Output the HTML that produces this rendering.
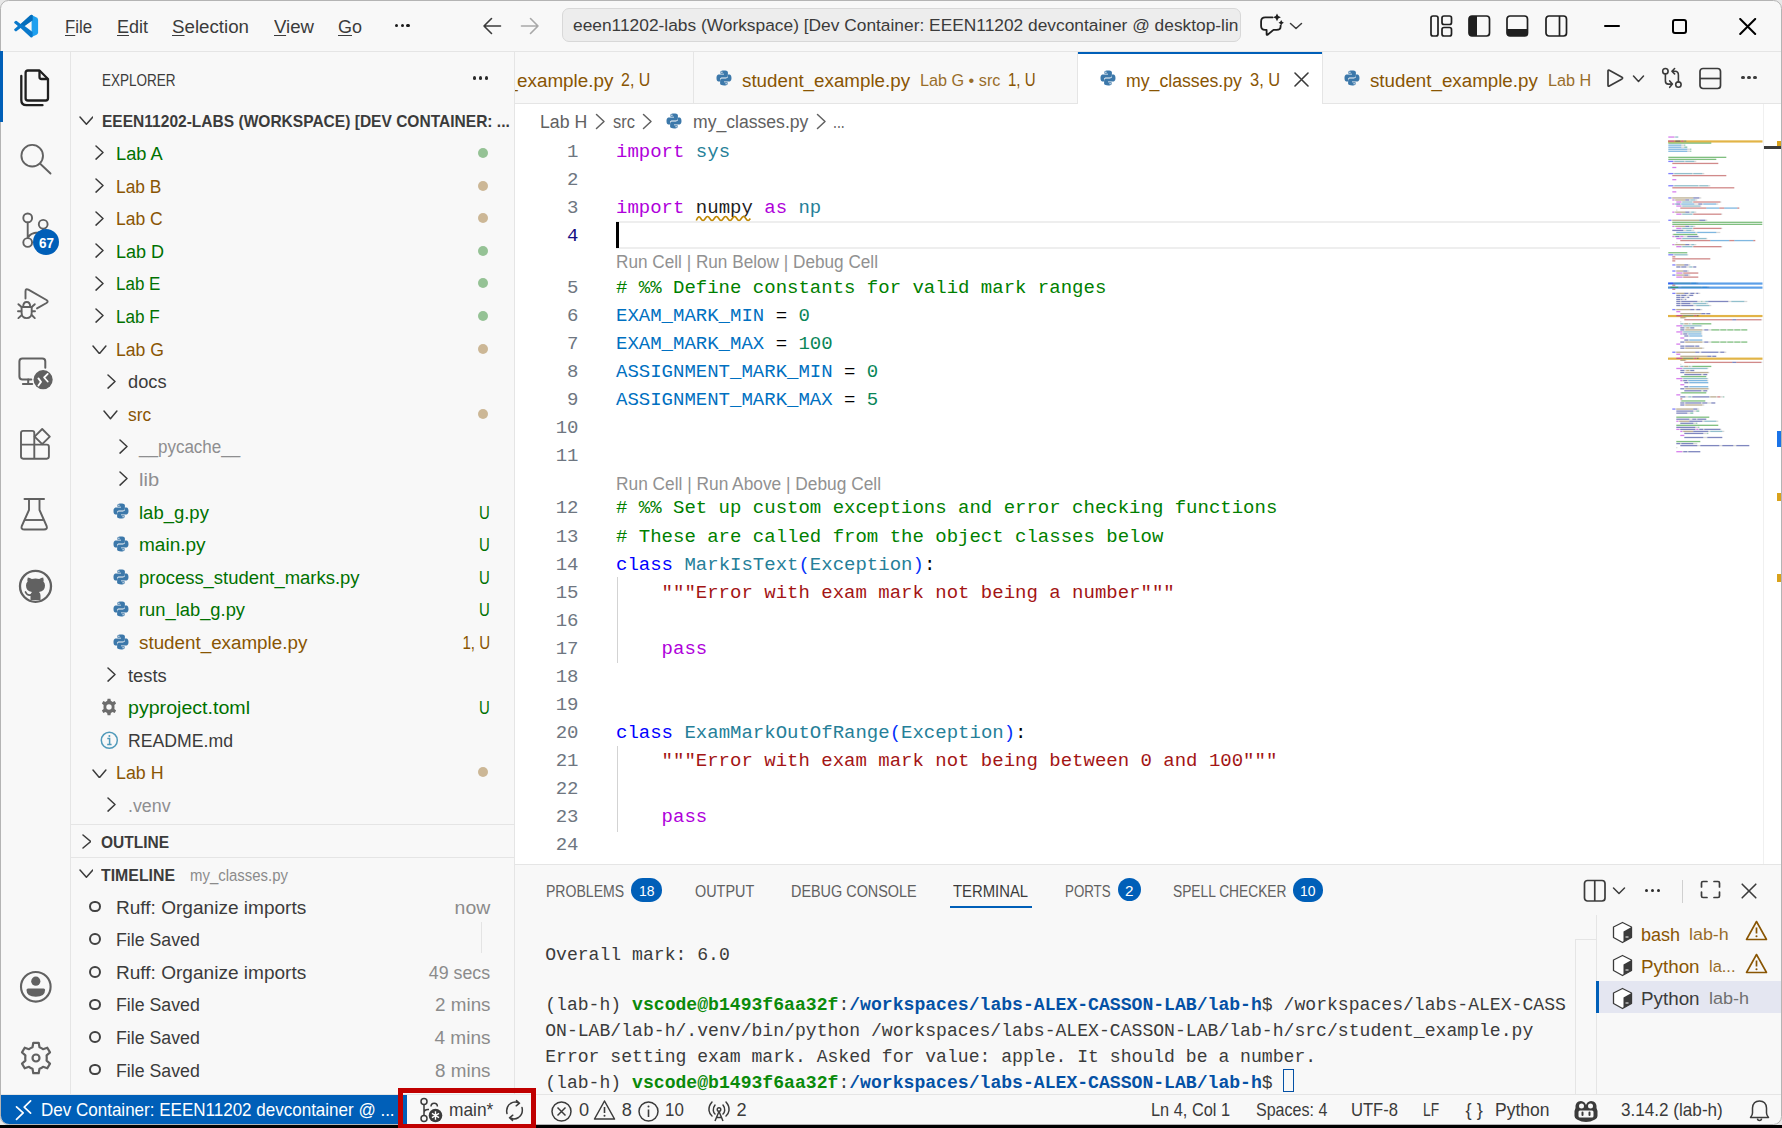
<!DOCTYPE html>
<html><head><meta charset="utf-8"><style>
html,body{margin:0;padding:0;width:1782px;height:1128px;overflow:hidden;background:#000;}
#root{position:absolute;left:0;top:0;width:1782px;height:1128px;overflow:hidden;}
</style></head><body><div id="root">
<div style="position:absolute;left:0px;top:0px;width:1782px;height:1128px;background:#e8e8e8;"></div>
<div style="position:absolute;left:0px;top:1124.5px;width:1782px;height:3.5px;background:#000000;"></div>
<div style="position:absolute;left:0;top:0;width:1782px;height:1125px;background:#f8f8f8;border-radius:8.5px;overflow:hidden;box-sizing:border-box;border:1px solid #b4b4b4;"></div>
<div style="position:absolute;left:1px;top:51px;width:1780px;height:1px;background:#e5e5e5;"></div>
<div style="position:absolute;left:70px;top:52px;width:1px;height:1042px;background:#e5e5e5;"></div>
<div style="position:absolute;left:0px;top:51px;width:3px;height:71px;background:#005fb8;"></div>
<div style="position:absolute;left:514px;top:52px;width:1px;height:1042px;background:#e5e5e5;"></div>
<div style="position:absolute;left:515px;top:104px;width:1266px;height:760px;background:#ffffff;"></div>
<div style="position:absolute;left:515px;top:103px;width:1266px;height:1px;background:#e5e5e5;"></div>
<div style="position:absolute;left:515px;top:864px;width:1266px;height:1px;background:#e5e5e5;"></div>
<div style="position:absolute;left:1px;top:1094px;width:1780px;height:1px;background:#e5e5e5;"></div>
<div style="position:absolute;left:71px;top:824px;width:443px;height:1px;background:#e5e5e5;"></div>
<div style="position:absolute;left:71px;top:857px;width:443px;height:1px;background:#e5e5e5;"></div>
<svg style="position:absolute;left:13.8px;top:13.6px;" width="25" height="25" viewBox="0 0 25 25" fill="none">
<path d="M17.6 1.0 L22.6 3.4 Q24.1 4.2 24.1 5.9 V18.2 Q24.1 19.9 22.6 20.7 L17.6 23.1 Z" fill="#1fa0ef"/>
<path d="M18.2 0.9 Q17.2 0.5 16.3 1.3 L6.6 10.1 L2.7 7.1 Q1.9 6.5 1.1 7.2 L0.5 7.8 Q-0.2 8.5 0.5 9.2 L3.9 12.1 L0.5 15.0 Q-0.2 15.7 0.5 16.4 L1.1 17.0 Q1.9 17.7 2.7 17.1 L6.6 14.1 L16.3 22.9 Q17.2 23.7 18.2 23.3 L18.6 23.1 V1.1 Z M18.6 6.3 V17.9 L10.6 12.1 Z" fill="#0a79cb" fill-rule="evenodd"/>
<path d="M18.6 6.3 L10.6 12.1 L6.6 10.1 L16.3 1.3 Q17.2 0.5 18.2 0.9 L18.6 1.1 Z" fill="#0066b0" opacity="0.6"/>
</svg>
<div id="t1" style="position:absolute;left:65px;top:16.78px;font-family:'Liberation Sans', sans-serif;font-size:19.2px;line-height:19.2px;color:#3b3b3b;font-weight:normal;white-space:pre;transform:scaleX(0.8727);transform-origin:left top;"><u style="text-decoration-thickness:1px;text-underline-offset:2px">F</u>ile</div>
<div id="t2" style="position:absolute;left:117.3px;top:16.78px;font-family:'Liberation Sans', sans-serif;font-size:19.2px;line-height:19.2px;color:#3b3b3b;font-weight:normal;white-space:pre;transform:scaleX(0.9372);transform-origin:left top;"><u style="text-decoration-thickness:1px;text-underline-offset:2px">E</u>dit</div>
<div id="t3" style="position:absolute;left:172.3px;top:16.78px;font-family:'Liberation Sans', sans-serif;font-size:19.2px;line-height:19.2px;color:#3b3b3b;font-weight:normal;white-space:pre;transform:scaleX(0.9753);transform-origin:left top;"><u style="text-decoration-thickness:1px;text-underline-offset:2px">S</u>election</div>
<div id="t4" style="position:absolute;left:273.5px;top:16.78px;font-family:'Liberation Sans', sans-serif;font-size:19.2px;line-height:19.2px;color:#3b3b3b;font-weight:normal;white-space:pre;transform:scaleX(0.9697);transform-origin:left top;"><u style="text-decoration-thickness:1px;text-underline-offset:2px">V</u>iew</div>
<div id="t5" style="position:absolute;left:337.8px;top:16.78px;font-family:'Liberation Sans', sans-serif;font-size:19.2px;line-height:19.2px;color:#3b3b3b;font-weight:normal;white-space:pre;transform:scaleX(0.9372);transform-origin:left top;"><u style="text-decoration-thickness:1px;text-underline-offset:2px">G</u>o</div>
<div style="position:absolute;left:394.59999999999997px;top:24px;width:3.2px;height:3.2px;background:#1a1a1a;border-radius:50%"></div>
<div style="position:absolute;left:400.5px;top:24px;width:3.2px;height:3.2px;background:#1a1a1a;border-radius:50%"></div>
<div style="position:absolute;left:406.4px;top:24px;width:3.2px;height:3.2px;background:#1a1a1a;border-radius:50%"></div>
<svg style="position:absolute;left:482px;top:16px;" width="20" height="20" viewBox="0 0 20 20" fill="none"><path d="M18.5 10 H2 M9.5 2.5 L2 10 L9.5 17.5" stroke="#3b3b3b" stroke-width="1.6" stroke-linecap="round" stroke-linejoin="round"/></svg>
<svg style="position:absolute;left:520px;top:16px;" width="20" height="20" viewBox="0 0 20 20" fill="none"><path d="M1.5 10 H18 M10.5 2.5 L18 10 L10.5 17.5" stroke="#a8a8a8" stroke-width="1.6" stroke-linecap="round" stroke-linejoin="round"/></svg>
<div style="position:absolute;left:562px;top:8px;width:679px;height:34px;box-sizing:border-box;background:#ededed;border:1px solid #d8d8d8;border-radius:7px;overflow:hidden"></div>
<div style="position:absolute;left:563px;top:9px;width:677px;height:32px;overflow:hidden">
<div id="t6" style="position:absolute;left:10px;top:8.38px;font-family:'Liberation Sans', sans-serif;font-size:17.2px;line-height:17.2px;color:#3b3b3b;font-weight:normal;white-space:pre;transform:scaleX(1.0091);transform-origin:left top;">eeen11202-labs (Workspace) [Dev Container: EEEN11202 devcontainer @ desktop-lin</div>
</div>
<svg style="position:absolute;left:1258px;top:13px;" width="28" height="26" viewBox="0 0 28 26" fill="none">
<path d="M14.5 4.4 H7.3 Q3.1 4.4 3.1 8.6 V13 Q3.1 16.9 7 16.9 H8.6 V21.3 Q8.6 22.4 9.6 21.7 L15.5 16.9 H18.6 Q22.6 16.9 22.6 13.5 V12.6" stroke="#1f1f1f" stroke-width="1.8" stroke-linejoin="round" stroke-linecap="round"/>
<path d="M19 0.4 L20.3 3 L22.9 4.3 L20.3 5.6 L19 8.2 L17.7 5.6 L15.1 4.3 L17.7 3 Z" fill="#1f1f1f"/>
<path d="M23.2 7 L24.2 8.7 L25.9 9.7 L24.2 10.7 L23.2 12.4 L22.2 10.7 L20.5 9.7 L22.2 8.7 Z" fill="#1f1f1f"/>
</svg>
<svg style="position:absolute;left:1289px;top:21px;" width="14" height="10" viewBox="0 0 14 10" fill="none"><path d="M1.5 2.5 L7 7.5 L12.5 2.5" stroke="#3b3b3b" stroke-width="1.5" stroke-linecap="round" stroke-linejoin="round"/></svg>
<svg style="position:absolute;left:1430px;top:15px;" width="23" height="22" viewBox="0 0 23 22" fill="none"><rect x="1" y="1" width="7" height="20" rx="2" stroke="#1f1f1f" stroke-width="1.7"/><rect x="12" y="1" width="9.5" height="8.5" rx="2" stroke="#1f1f1f" stroke-width="1.7"/><rect x="12" y="12.5" width="9.5" height="8.5" rx="2" stroke="#1f1f1f" stroke-width="1.7"/></svg>
<svg style="position:absolute;left:1468px;top:15px;" width="23" height="22" viewBox="0 0 23 22" fill="none"><rect x="1" y="1" width="20.5" height="20" rx="3" stroke="#1f1f1f" stroke-width="1.7"/><path d="M4 1 H9 V21 H4 Q1 21 1 18 V4 Q1 1 4 1 Z" fill="#1f1f1f"/></svg>
<svg style="position:absolute;left:1506px;top:15px;" width="23" height="22" viewBox="0 0 23 22" fill="none"><rect x="1" y="1" width="20.5" height="20" rx="3" stroke="#1f1f1f" stroke-width="1.7"/><path d="M1 14 H21.5 V18 Q21.5 21 18.5 21 H4 Q1 21 1 18 Z" fill="#1f1f1f"/></svg>
<svg style="position:absolute;left:1545px;top:15px;" width="23" height="22" viewBox="0 0 23 22" fill="none"><rect x="1" y="1" width="20.5" height="20" rx="3" stroke="#1f1f1f" stroke-width="1.7"/><path d="M14.5 1 V21" stroke="#1f1f1f" stroke-width="1.7"/></svg>
<div style="position:absolute;left:1604px;top:24.5px;width:15.5px;height:2px;background:#000000;border-radius:1px"></div>
<div style="position:absolute;left:1672.3px;top:18.5px;width:14.8px;height:15.2px;box-sizing:border-box;border:2px solid #000000;border-radius:3px"></div>
<svg style="position:absolute;left:1739px;top:18px;" width="18" height="17" viewBox="0 0 18 17" fill="none"><path d="M1.2 1 L16.2 16 M16.2 1 L1.2 16" stroke="#000000" stroke-width="2" stroke-linecap="round"/></svg>
<svg style="position:absolute;left:18px;top:68px;" width="34" height="40" viewBox="0 0 34 40" fill="none">
<path d="M7.6 4.8 Q7.6 2.5 9.9 2.5 H21.5 L30 11 V30.2 Q30 32.5 27.7 32.5 H9.9 Q7.6 32.5 7.6 30.2 Z" stroke="#1f1f1f" stroke-width="2.3" stroke-linejoin="round"/>
<path d="M21.5 2.5 V9 Q21.5 11 23.5 11 H30" stroke="#1f1f1f" stroke-width="2.3" stroke-linejoin="round"/>
<path d="M3.3 8 V32 Q3.3 37.2 8.5 37.2 H24.5" stroke="#1f1f1f" stroke-width="2.3" stroke-linecap="round"/>
</svg>
<svg style="position:absolute;left:18px;top:142px;" width="36" height="36" viewBox="0 0 36 36" fill="none"><circle cx="14.2" cy="13.7" r="10.8" stroke="#616161" stroke-width="1.9"/><path d="M22.2 21.8 L32.5 31.5" stroke="#616161" stroke-width="1.9" stroke-linecap="round"/></svg>
<svg style="position:absolute;left:0px;top:200px;" width="70" height="60" viewBox="0 0 70 60" fill="none">
<circle cx="27.7" cy="17.9" r="4.4" stroke="#616161" stroke-width="1.9"/>
<circle cx="27.7" cy="42.5" r="4.4" stroke="#616161" stroke-width="1.9"/>
<circle cx="43.2" cy="24.3" r="4.4" stroke="#616161" stroke-width="1.9"/>
<path d="M27.7 22.3 V38.1 M43.2 28.7 Q43 32 38 32.5 Q30 33 28.2 37.5" stroke="#616161" stroke-width="1.9"/>
</svg>
<div style="position:absolute;left:32.6px;top:228.7px;width:26.6px;height:26.6px;border-radius:50%;background:#005fb8"></div>
<div id="t7" style="position:absolute;left:38.6px;top:236.47px;font-family:'Liberation Sans', sans-serif;font-size:14.5px;line-height:14.5px;color:#ffffff;font-weight:bold;white-space:pre;transform:scaleX(0.9293);transform-origin:left top;">67</div>
<svg style="position:absolute;left:0px;top:280px;" width="70" height="50" viewBox="0 0 70 50" fill="none">
<path d="M25.5 18.6 V11.5 Q25.5 8.2 28.4 9.7 L46.5 20 Q48.8 21.5 46.5 23 L37 28.4" stroke="#616161" stroke-width="1.9" stroke-linejoin="round" stroke-linecap="round"/>
<path d="M21.6 27 H31.7 V32.5 Q31.7 38.1 26.6 38.1 Q21.6 38.1 21.6 32.5 Z" stroke="#616161" stroke-width="1.9" stroke-linejoin="round"/>
<path d="M23.2 26.8 Q23.2 22 26.7 22 Q30.2 22 30.2 26.8" stroke="#616161" stroke-width="1.9"/>
<path d="M18.4 24.2 L21.3 26.8 M18 31.3 H21.3 M18.4 38.1 L21.6 35.3 M34.8 24.2 L32 26.8 M35 31.3 H31.8 M34.8 38.1 L31.7 35" stroke="#616161" stroke-width="1.9" stroke-linecap="round"/>
</svg>
<svg style="position:absolute;left:16px;top:355px;" width="40" height="40" viewBox="0 0 40 40" fill="none">
<path d="M29.3 12.7 V6.5 Q29.3 3.5 26.3 3.5 H6.4 Q3.4 3.5 3.4 6.5 V21.6 Q3.4 24.6 6.4 24.6 H15.3" stroke="#616161" stroke-width="2" stroke-linecap="round" stroke-linejoin="round"/>
<path d="M12.2 24.6 V29.1 M6.9 29.1 H16.2" stroke="#616161" stroke-width="2" stroke-linecap="round"/>
<circle cx="27.1" cy="24.7" r="9.6" fill="#616161"/>
<path d="M22.4 23.4 L25 26.9 L22.4 30.5 M31.7 18.9 L28.1 22.5 L31.7 26.5" stroke="#ffffff" stroke-width="1.8" stroke-linecap="round" stroke-linejoin="round"/>
</svg>
<svg style="position:absolute;left:18px;top:425px;" width="36" height="36" viewBox="0 0 36 36" fill="none">
<path d="M3 8 Q3 5.9 5.1 5.9 H14.2 Q16.3 5.9 16.3 8 V19.6 H28.8 Q30.9 19.6 30.9 21.7 V31.6 Q30.9 33.7 28.8 33.7 H5.1 Q3 33.7 3 31.6 Z M3 19.6 H16.3 M16.3 19.6 V33.7" stroke="#616161" stroke-width="1.9" stroke-linejoin="round"/>
<path d="M24.2 4 L31.8 11.6 L24.2 19.2 L16.6 11.6 Z" stroke="#616161" stroke-width="1.9" stroke-linejoin="round"/>
</svg>
<svg style="position:absolute;left:18px;top:496px;" width="36" height="38" viewBox="0 0 36 38" fill="none">
<path d="M6.5 3 H26" stroke="#616161" stroke-width="2" stroke-linecap="round"/>
<path d="M11 3 V14 L3.8 30 Q2.6 33.5 6.5 33.5 H26 Q29.8 33.5 28.6 30 L21.5 14 V3" stroke="#616161" stroke-width="1.9" stroke-linejoin="round"/>
<path d="M7 24 H25.5" stroke="#616161" stroke-width="1.9"/>
</svg>
<svg style="position:absolute;left:17px;top:568px;" width="38" height="38" viewBox="0 0 38 38" fill="none">
<circle cx="18.5" cy="18.3" r="15.5" stroke="#616161" stroke-width="2.3"/>
<path d="M13.5 32 V27.5 Q13.5 25 15 24 Q9 23 9 17.5 Q9 15 10.6 13.4 Q10.1 11.5 10.8 9.4 Q12.8 9.4 14.8 11 Q18.5 10 22.2 11 Q24.2 9.4 26.2 9.4 Q26.9 11.5 26.4 13.4 Q28 15 28 17.5 Q28 23 22 24 Q23.5 25 23.5 27.5 V32 Z" fill="#616161"/>
<path d="M13.5 27 Q10 27.5 8.5 24" stroke="#616161" stroke-width="1.8" stroke-linecap="round"/>
</svg>
<svg style="position:absolute;left:17px;top:968px;" width="38" height="38" viewBox="0 0 38 38" fill="none">
<circle cx="18.8" cy="18.8" r="14.8" stroke="#616161" stroke-width="2.1"/>
<circle cx="18.8" cy="13.2" r="4.6" fill="#616161"/>
<path d="M9.5 22 Q9.5 20.5 11 20.5 H26.6 Q28.1 20.5 28.1 22 Q28.1 28.8 18.8 28.8 Q9.5 28.8 9.5 22 Z" fill="#616161"/>
</svg>
<svg style="position:absolute;left:18px;top:1040px" width="36" height="36" viewBox="0 0 36 36" fill="none">
<path d="M15.3 2.8 H20.7 L21.5 7.2 Q23.5 8 25 9.2 L29.3 7.7 L32 12.4 L28.6 15.3 Q28.9 18 28.6 20.7 L32 23.6 L29.3 28.3 L25 26.8 Q23.5 28 21.5 28.8 L20.7 33.2 H15.3 L14.5 28.8 Q12.5 28 11 26.8 L6.7 28.3 L4 23.6 L7.4 20.7 Q7.1 18 7.4 15.3 L4 12.4 L6.7 7.7 L11 9.2 Q12.5 8 14.5 7.2 Z" stroke="#616161" stroke-width="2.2" stroke-linejoin="round"/>
<circle cx="18" cy="18" r="3.5" stroke="#616161" stroke-width="2.2"/>
</svg>
<div id="t8" style="position:absolute;left:101.5px;top:71.94px;font-family:'Liberation Sans', sans-serif;font-size:16.3px;line-height:16.3px;color:#3b3b3b;font-weight:normal;white-space:pre;transform:scaleX(0.8299);transform-origin:left top;">EXPLORER</div>
<div style="position:absolute;left:472.79999999999995px;top:76.4px;width:3.2px;height:3.2px;background:#2b2b2b;border-radius:50%"></div>
<div style="position:absolute;left:478.7px;top:76.4px;width:3.2px;height:3.2px;background:#2b2b2b;border-radius:50%"></div>
<div style="position:absolute;left:484.7px;top:76.4px;width:3.2px;height:3.2px;background:#2b2b2b;border-radius:50%"></div>
<svg style="position:absolute;left:78.6px;top:116.2px;" width="14.8" height="9.3" viewBox="0 0 14.8 9.3" fill="none"><path d="M1 1 L7.4 8.3 L13.8 1" stroke="#3b3b3b" stroke-width="1.5" stroke-linecap="round" stroke-linejoin="round"/></svg>
<div id="t9" style="position:absolute;left:101.6px;top:113.24px;font-family:'Liberation Sans', sans-serif;font-size:16.3px;line-height:16.3px;color:#3b3b3b;font-weight:bold;white-space:pre;transform:scaleX(0.9544);transform-origin:left top;">EEEN11202-LABS (WORKSPACE) [DEV CONTAINER: ...</div>
<svg style="position:absolute;left:95.4px;top:145.45px;" width="9" height="15.1" viewBox="0 0 9 15.1" fill="none"><path d="M1 1 L8 7.55 L1 14.1" stroke="#3b3b3b" stroke-width="1.5" stroke-linecap="round" stroke-linejoin="round"/></svg>
<div id="t10" style="position:absolute;left:116.1px;top:144.08px;font-family:'Liberation Sans', sans-serif;font-size:19.2px;line-height:19.2px;color:#007100;font-weight:normal;white-space:pre;transform:scaleX(0.9512);transform-origin:left top;">Lab A</div>
<div style="position:absolute;left:478px;top:148.0px;width:10px;height:10px;background:#95c295;border-radius:50%"></div>
<svg style="position:absolute;left:95.4px;top:178.04999999999998px;" width="9" height="15.1" viewBox="0 0 9 15.1" fill="none"><path d="M1 1 L8 7.55 L1 14.1" stroke="#3b3b3b" stroke-width="1.5" stroke-linecap="round" stroke-linejoin="round"/></svg>
<div id="t11" style="position:absolute;left:116.1px;top:176.68px;font-family:'Liberation Sans', sans-serif;font-size:19.2px;line-height:19.2px;color:#895503;font-weight:normal;white-space:pre;transform:scaleX(0.9052);transform-origin:left top;">Lab B</div>
<div style="position:absolute;left:478px;top:180.6px;width:10px;height:10px;background:#ccb796;border-radius:50%"></div>
<svg style="position:absolute;left:95.4px;top:210.64999999999998px;" width="9" height="15.1" viewBox="0 0 9 15.1" fill="none"><path d="M1 1 L8 7.55 L1 14.1" stroke="#3b3b3b" stroke-width="1.5" stroke-linecap="round" stroke-linejoin="round"/></svg>
<div id="t12" style="position:absolute;left:116.1px;top:209.28px;font-family:'Liberation Sans', sans-serif;font-size:19.2px;line-height:19.2px;color:#895503;font-weight:normal;white-space:pre;transform:scaleX(0.9121);transform-origin:left top;">Lab C</div>
<div style="position:absolute;left:478px;top:213.2px;width:10px;height:10px;background:#ccb796;border-radius:50%"></div>
<svg style="position:absolute;left:95.4px;top:243.25px;" width="9" height="15.1" viewBox="0 0 9 15.1" fill="none"><path d="M1 1 L8 7.55 L1 14.1" stroke="#3b3b3b" stroke-width="1.5" stroke-linecap="round" stroke-linejoin="round"/></svg>
<div id="t13" style="position:absolute;left:116.1px;top:241.88px;font-family:'Liberation Sans', sans-serif;font-size:19.2px;line-height:19.2px;color:#007100;font-weight:normal;white-space:pre;transform:scaleX(0.9394);transform-origin:left top;">Lab D</div>
<div style="position:absolute;left:478px;top:245.8px;width:10px;height:10px;background:#95c295;border-radius:50%"></div>
<svg style="position:absolute;left:95.4px;top:275.85px;" width="9" height="15.1" viewBox="0 0 9 15.1" fill="none"><path d="M1 1 L8 7.55 L1 14.1" stroke="#3b3b3b" stroke-width="1.5" stroke-linecap="round" stroke-linejoin="round"/></svg>
<div id="t14" style="position:absolute;left:116.1px;top:274.48px;font-family:'Liberation Sans', sans-serif;font-size:19.2px;line-height:19.2px;color:#007100;font-weight:normal;white-space:pre;transform:scaleX(0.8852);transform-origin:left top;">Lab E</div>
<div style="position:absolute;left:478px;top:278.40000000000003px;width:10px;height:10px;background:#95c295;border-radius:50%"></div>
<svg style="position:absolute;left:95.4px;top:308.45px;" width="9" height="15.1" viewBox="0 0 9 15.1" fill="none"><path d="M1 1 L8 7.55 L1 14.1" stroke="#3b3b3b" stroke-width="1.5" stroke-linecap="round" stroke-linejoin="round"/></svg>
<div id="t15" style="position:absolute;left:116.1px;top:307.08px;font-family:'Liberation Sans', sans-serif;font-size:19.2px;line-height:19.2px;color:#007100;font-weight:normal;white-space:pre;transform:scaleX(0.8925);transform-origin:left top;">Lab F</div>
<div style="position:absolute;left:478px;top:311.0px;width:10px;height:10px;background:#95c295;border-radius:50%"></div>
<svg style="position:absolute;left:91.8px;top:344.70000000000005px;" width="14.9" height="9.7" viewBox="0 0 14.9 9.7" fill="none"><path d="M1 1 L7.45 8.7 L13.9 1" stroke="#3b3b3b" stroke-width="1.5" stroke-linecap="round" stroke-linejoin="round"/></svg>
<div id="t16" style="position:absolute;left:116.1px;top:339.68px;font-family:'Liberation Sans', sans-serif;font-size:19.2px;line-height:19.2px;color:#895503;font-weight:normal;white-space:pre;transform:scaleX(0.9162);transform-origin:left top;">Lab G</div>
<div style="position:absolute;left:478px;top:343.6px;width:10px;height:10px;background:#ccb796;border-radius:50%"></div>
<svg style="position:absolute;left:107.2px;top:373.65px;" width="9" height="15.1" viewBox="0 0 9 15.1" fill="none"><path d="M1 1 L8 7.55 L1 14.1" stroke="#3b3b3b" stroke-width="1.5" stroke-linecap="round" stroke-linejoin="round"/></svg>
<div id="t17" style="position:absolute;left:127.8px;top:372.28px;font-family:'Liberation Sans', sans-serif;font-size:19.2px;line-height:19.2px;color:#3b3b3b;font-weight:normal;white-space:pre;transform:scaleX(0.9499);transform-origin:left top;">docs</div>
<svg style="position:absolute;left:103.4px;top:409.90000000000003px;" width="14.9" height="9.7" viewBox="0 0 14.9 9.7" fill="none"><path d="M1 1 L7.45 8.7 L13.9 1" stroke="#3b3b3b" stroke-width="1.5" stroke-linecap="round" stroke-linejoin="round"/></svg>
<div id="t18" style="position:absolute;left:127.8px;top:404.88px;font-family:'Liberation Sans', sans-serif;font-size:19.2px;line-height:19.2px;color:#895503;font-weight:normal;white-space:pre;transform:scaleX(0.9031);transform-origin:left top;">src</div>
<div style="position:absolute;left:478px;top:408.8px;width:10px;height:10px;background:#ccb796;border-radius:50%"></div>
<svg style="position:absolute;left:118.8px;top:438.85px;" width="9" height="15.1" viewBox="0 0 9 15.1" fill="none"><path d="M1 1 L8 7.55 L1 14.1" stroke="#3b3b3b" stroke-width="1.5" stroke-linecap="round" stroke-linejoin="round"/></svg>
<div id="t19" style="position:absolute;left:139.4px;top:437.48px;font-family:'Liberation Sans', sans-serif;font-size:19.2px;line-height:19.2px;color:#8e8e90;font-weight:normal;white-space:pre;transform:scaleX(0.8865);transform-origin:left top;">__pycache__</div>
<svg style="position:absolute;left:118.8px;top:471.45px;" width="9" height="15.1" viewBox="0 0 9 15.1" fill="none"><path d="M1 1 L8 7.55 L1 14.1" stroke="#3b3b3b" stroke-width="1.5" stroke-linecap="round" stroke-linejoin="round"/></svg>
<div id="t20" style="position:absolute;left:139.4px;top:470.08px;font-family:'Liberation Sans', sans-serif;font-size:19.2px;line-height:19.2px;color:#8e8e90;font-weight:normal;white-space:pre;transform:scaleX(1.0467);transform-origin:left top;">lib</div>
<svg style="position:absolute;left:113px;top:503.4000000000001px;" width="16" height="16" viewBox="0 0 16 16" fill="none"><path d="M7.9 0.5 C4.2 0.5 4.4 2.1 4.4 2.1 V3.8 H8 V4.4 H3 C3 4.4 0.5 4.1 0.5 7.9 C0.5 11.7 2.7 11.5 2.7 11.5 H4 V9.7 C4 9.7 3.9 7.5 6.2 7.5 H9.8 C9.8 7.5 11.9 7.6 11.9 5.4 V2.4 C11.9 2.4 12.2 0.5 7.9 0.5 Z M5.9 1.6 A0.65 0.65 0 1 1 5.9 2.9 A0.65 0.65 0 1 1 5.9 1.6 Z" fill="#3c78aa"/>
<path d="M8.1 15.5 C11.8 15.5 11.6 13.9 11.6 13.9 V12.2 H8 V11.6 H13 C13 11.6 15.5 11.9 15.5 8.1 C15.5 4.3 13.3 4.5 13.3 4.5 H12 V6.3 C12 6.3 12.1 8.5 9.8 8.5 H6.2 C6.2 8.5 4.1 8.4 4.1 10.6 V13.6 C4.1 13.6 3.8 15.5 8.1 15.5 Z M10.1 14.4 A0.65 0.65 0 1 1 10.1 13.1 A0.65 0.65 0 1 1 10.1 14.4 Z" fill="#3c78aa"/></svg>
<div id="t21" style="position:absolute;left:139.4px;top:502.68px;font-family:'Liberation Sans', sans-serif;font-size:19.2px;line-height:19.2px;color:#007100;font-weight:normal;white-space:pre;transform:scaleX(0.9635);transform-origin:left top;">lab_g.py</div>
<div id="t22" style="position:absolute;right:1292.2px;top:502.68px;font-family:'Liberation Sans', sans-serif;font-size:19.2px;line-height:19.2px;color:#007100;font-weight:normal;white-space:pre;transform:scaleX(0.7793);transform-origin:right top;">U</div>
<svg style="position:absolute;left:113px;top:536.0px;" width="16" height="16" viewBox="0 0 16 16" fill="none"><path d="M7.9 0.5 C4.2 0.5 4.4 2.1 4.4 2.1 V3.8 H8 V4.4 H3 C3 4.4 0.5 4.1 0.5 7.9 C0.5 11.7 2.7 11.5 2.7 11.5 H4 V9.7 C4 9.7 3.9 7.5 6.2 7.5 H9.8 C9.8 7.5 11.9 7.6 11.9 5.4 V2.4 C11.9 2.4 12.2 0.5 7.9 0.5 Z M5.9 1.6 A0.65 0.65 0 1 1 5.9 2.9 A0.65 0.65 0 1 1 5.9 1.6 Z" fill="#3c78aa"/>
<path d="M8.1 15.5 C11.8 15.5 11.6 13.9 11.6 13.9 V12.2 H8 V11.6 H13 C13 11.6 15.5 11.9 15.5 8.1 C15.5 4.3 13.3 4.5 13.3 4.5 H12 V6.3 C12 6.3 12.1 8.5 9.8 8.5 H6.2 C6.2 8.5 4.1 8.4 4.1 10.6 V13.6 C4.1 13.6 3.8 15.5 8.1 15.5 Z M10.1 14.4 A0.65 0.65 0 1 1 10.1 13.1 A0.65 0.65 0 1 1 10.1 14.4 Z" fill="#3c78aa"/></svg>
<div id="t23" style="position:absolute;left:139.4px;top:535.28px;font-family:'Liberation Sans', sans-serif;font-size:19.2px;line-height:19.2px;color:#007100;font-weight:normal;white-space:pre;transform:scaleX(0.9913);transform-origin:left top;">main.py</div>
<div id="t24" style="position:absolute;right:1292.2px;top:535.28px;font-family:'Liberation Sans', sans-serif;font-size:19.2px;line-height:19.2px;color:#007100;font-weight:normal;white-space:pre;transform:scaleX(0.7793);transform-origin:right top;">U</div>
<svg style="position:absolute;left:113px;top:568.6px;" width="16" height="16" viewBox="0 0 16 16" fill="none"><path d="M7.9 0.5 C4.2 0.5 4.4 2.1 4.4 2.1 V3.8 H8 V4.4 H3 C3 4.4 0.5 4.1 0.5 7.9 C0.5 11.7 2.7 11.5 2.7 11.5 H4 V9.7 C4 9.7 3.9 7.5 6.2 7.5 H9.8 C9.8 7.5 11.9 7.6 11.9 5.4 V2.4 C11.9 2.4 12.2 0.5 7.9 0.5 Z M5.9 1.6 A0.65 0.65 0 1 1 5.9 2.9 A0.65 0.65 0 1 1 5.9 1.6 Z" fill="#3c78aa"/>
<path d="M8.1 15.5 C11.8 15.5 11.6 13.9 11.6 13.9 V12.2 H8 V11.6 H13 C13 11.6 15.5 11.9 15.5 8.1 C15.5 4.3 13.3 4.5 13.3 4.5 H12 V6.3 C12 6.3 12.1 8.5 9.8 8.5 H6.2 C6.2 8.5 4.1 8.4 4.1 10.6 V13.6 C4.1 13.6 3.8 15.5 8.1 15.5 Z M10.1 14.4 A0.65 0.65 0 1 1 10.1 13.1 A0.65 0.65 0 1 1 10.1 14.4 Z" fill="#3c78aa"/></svg>
<div id="t25" style="position:absolute;left:139.4px;top:567.88px;font-family:'Liberation Sans', sans-serif;font-size:19.2px;line-height:19.2px;color:#007100;font-weight:normal;white-space:pre;transform:scaleX(0.9616);transform-origin:left top;">process_student_marks.py</div>
<div id="t26" style="position:absolute;right:1292.2px;top:567.88px;font-family:'Liberation Sans', sans-serif;font-size:19.2px;line-height:19.2px;color:#007100;font-weight:normal;white-space:pre;transform:scaleX(0.7793);transform-origin:right top;">U</div>
<svg style="position:absolute;left:113px;top:601.2px;" width="16" height="16" viewBox="0 0 16 16" fill="none"><path d="M7.9 0.5 C4.2 0.5 4.4 2.1 4.4 2.1 V3.8 H8 V4.4 H3 C3 4.4 0.5 4.1 0.5 7.9 C0.5 11.7 2.7 11.5 2.7 11.5 H4 V9.7 C4 9.7 3.9 7.5 6.2 7.5 H9.8 C9.8 7.5 11.9 7.6 11.9 5.4 V2.4 C11.9 2.4 12.2 0.5 7.9 0.5 Z M5.9 1.6 A0.65 0.65 0 1 1 5.9 2.9 A0.65 0.65 0 1 1 5.9 1.6 Z" fill="#3c78aa"/>
<path d="M8.1 15.5 C11.8 15.5 11.6 13.9 11.6 13.9 V12.2 H8 V11.6 H13 C13 11.6 15.5 11.9 15.5 8.1 C15.5 4.3 13.3 4.5 13.3 4.5 H12 V6.3 C12 6.3 12.1 8.5 9.8 8.5 H6.2 C6.2 8.5 4.1 8.4 4.1 10.6 V13.6 C4.1 13.6 3.8 15.5 8.1 15.5 Z M10.1 14.4 A0.65 0.65 0 1 1 10.1 13.1 A0.65 0.65 0 1 1 10.1 14.4 Z" fill="#3c78aa"/></svg>
<div id="t27" style="position:absolute;left:139.4px;top:600.48px;font-family:'Liberation Sans', sans-serif;font-size:19.2px;line-height:19.2px;color:#007100;font-weight:normal;white-space:pre;transform:scaleX(0.9554);transform-origin:left top;">run_lab_g.py</div>
<div id="t28" style="position:absolute;right:1292.2px;top:600.48px;font-family:'Liberation Sans', sans-serif;font-size:19.2px;line-height:19.2px;color:#007100;font-weight:normal;white-space:pre;transform:scaleX(0.7793);transform-origin:right top;">U</div>
<svg style="position:absolute;left:113px;top:633.8px;" width="16" height="16" viewBox="0 0 16 16" fill="none"><path d="M7.9 0.5 C4.2 0.5 4.4 2.1 4.4 2.1 V3.8 H8 V4.4 H3 C3 4.4 0.5 4.1 0.5 7.9 C0.5 11.7 2.7 11.5 2.7 11.5 H4 V9.7 C4 9.7 3.9 7.5 6.2 7.5 H9.8 C9.8 7.5 11.9 7.6 11.9 5.4 V2.4 C11.9 2.4 12.2 0.5 7.9 0.5 Z M5.9 1.6 A0.65 0.65 0 1 1 5.9 2.9 A0.65 0.65 0 1 1 5.9 1.6 Z" fill="#3c78aa"/>
<path d="M8.1 15.5 C11.8 15.5 11.6 13.9 11.6 13.9 V12.2 H8 V11.6 H13 C13 11.6 15.5 11.9 15.5 8.1 C15.5 4.3 13.3 4.5 13.3 4.5 H12 V6.3 C12 6.3 12.1 8.5 9.8 8.5 H6.2 C6.2 8.5 4.1 8.4 4.1 10.6 V13.6 C4.1 13.6 3.8 15.5 8.1 15.5 Z M10.1 14.4 A0.65 0.65 0 1 1 10.1 13.1 A0.65 0.65 0 1 1 10.1 14.4 Z" fill="#3c78aa"/></svg>
<div id="t29" style="position:absolute;left:139.4px;top:633.08px;font-family:'Liberation Sans', sans-serif;font-size:19.2px;line-height:19.2px;color:#895503;font-weight:normal;white-space:pre;transform:scaleX(0.9800);transform-origin:left top;">student_example.py</div>
<div id="t30" style="position:absolute;right:1292.2px;top:633.08px;font-family:'Liberation Sans', sans-serif;font-size:19.2px;line-height:19.2px;color:#895503;font-weight:normal;white-space:pre;transform:scaleX(0.7897);transform-origin:right top;">1, U</div>
<svg style="position:absolute;left:107.2px;top:667.0500000000002px;" width="9" height="15.1" viewBox="0 0 9 15.1" fill="none"><path d="M1 1 L8 7.55 L1 14.1" stroke="#3b3b3b" stroke-width="1.5" stroke-linecap="round" stroke-linejoin="round"/></svg>
<div id="t31" style="position:absolute;left:127.8px;top:665.68px;font-family:'Liberation Sans', sans-serif;font-size:19.2px;line-height:19.2px;color:#3b3b3b;font-weight:normal;white-space:pre;transform:scaleX(0.9548);transform-origin:left top;">tests</div>
<svg style="position:absolute;left:100px;top:698.4000000000001px;" width="18" height="18" viewBox="0 0 18 18" fill="none"><path d="M7.6 0.8 H10.4 L10.9 3 Q11.8 3.3 12.5 3.9 L14.7 3.1 L16.1 5.5 L14.4 7 Q14.6 9 14.4 11 L16.1 12.5 L14.7 14.9 L12.5 14.1 Q11.8 14.7 10.9 15 L10.4 17.2 H7.6 L7.1 15 Q6.2 14.7 5.5 14.1 L3.3 14.9 L1.9 12.5 L3.6 11 Q3.4 9 3.6 7 L1.9 5.5 L3.3 3.1 L5.5 3.9 Q6.2 3.3 7.1 3 Z M9 6.3 A2.7 2.7 0 1 0 9 11.7 A2.7 2.7 0 1 0 9 6.3 Z" fill="#6c6c6c" fill-rule="evenodd"/></svg>
<div id="t32" style="position:absolute;left:127.8px;top:698.28px;font-family:'Liberation Sans', sans-serif;font-size:19.2px;line-height:19.2px;color:#007100;font-weight:normal;white-space:pre;transform:scaleX(1.0215);transform-origin:left top;">pyproject.toml</div>
<div id="t33" style="position:absolute;right:1292.2px;top:698.28px;font-family:'Liberation Sans', sans-serif;font-size:19.2px;line-height:19.2px;color:#007100;font-weight:normal;white-space:pre;transform:scaleX(0.7793);transform-origin:right top;">U</div>
<svg style="position:absolute;left:100px;top:730.8000000000002px;" width="19" height="19" viewBox="0 0 19 19" fill="none"><circle cx="9.3" cy="9.3" r="8" stroke="#519aba" stroke-width="1.5"/><path d="M7.3 7.6 H9.6 V13.6 M7.2 13.6 H11.6" stroke="#519aba" stroke-width="1.5"/><circle cx="9.4" cy="5" r="1" fill="#519aba"/></svg>
<div id="t34" style="position:absolute;left:127.8px;top:730.88px;font-family:'Liberation Sans', sans-serif;font-size:19.2px;line-height:19.2px;color:#3b3b3b;font-weight:normal;white-space:pre;transform:scaleX(0.9204);transform-origin:left top;">README.md</div>
<svg style="position:absolute;left:91.8px;top:768.5000000000001px;" width="14.9" height="9.7" viewBox="0 0 14.9 9.7" fill="none"><path d="M1 1 L7.45 8.7 L13.9 1" stroke="#3b3b3b" stroke-width="1.5" stroke-linecap="round" stroke-linejoin="round"/></svg>
<div id="t35" style="position:absolute;left:116.1px;top:763.48px;font-family:'Liberation Sans', sans-serif;font-size:19.2px;line-height:19.2px;color:#895503;font-weight:normal;white-space:pre;transform:scaleX(0.9277);transform-origin:left top;">Lab H</div>
<div style="position:absolute;left:478px;top:767.4000000000001px;width:10px;height:10px;background:#ccb796;border-radius:50%"></div>
<svg style="position:absolute;left:107.2px;top:797.45px;" width="9" height="15.1" viewBox="0 0 9 15.1" fill="none"><path d="M1 1 L8 7.55 L1 14.1" stroke="#3b3b3b" stroke-width="1.5" stroke-linecap="round" stroke-linejoin="round"/></svg>
<div id="t36" style="position:absolute;left:127.8px;top:796.08px;font-family:'Liberation Sans', sans-serif;font-size:19.2px;line-height:19.2px;color:#8e8e90;font-weight:normal;white-space:pre;transform:scaleX(0.9286);transform-origin:left top;">.venv</div>
<svg style="position:absolute;left:81.5px;top:834.4px;" width="9.7" height="15" viewBox="0 0 9.7 15" fill="none"><path d="M1 1 L8.7 7.5 L1 14" stroke="#3b3b3b" stroke-width="1.5" stroke-linecap="round" stroke-linejoin="round"/></svg>
<div id="t37" style="position:absolute;left:100.7px;top:834.45px;font-family:'Liberation Sans', sans-serif;font-size:16.3px;line-height:16.3px;color:#3b3b3b;font-weight:bold;white-space:pre;transform:scaleX(0.9517);transform-origin:left top;">OUTLINE</div>
<svg style="position:absolute;left:78.6px;top:868.8px;" width="14.8" height="9.3" viewBox="0 0 14.8 9.3" fill="none"><path d="M1 1 L7.4 8.3 L13.8 1" stroke="#3b3b3b" stroke-width="1.5" stroke-linecap="round" stroke-linejoin="round"/></svg>
<div id="t38" style="position:absolute;left:100.7px;top:866.54px;font-family:'Liberation Sans', sans-serif;font-size:16.3px;line-height:16.3px;color:#3b3b3b;font-weight:bold;white-space:pre;transform:scaleX(0.9739);transform-origin:left top;">TIMELINE</div>
<div id="t39" style="position:absolute;left:189.7px;top:866.54px;font-family:'Liberation Sans', sans-serif;font-size:16.3px;line-height:16.3px;color:#8b8b8b;font-weight:normal;white-space:pre;transform:scaleX(0.9178);transform-origin:left top;">my_classes.py</div>
<div style="position:absolute;left:89px;top:900.7px;width:11.8px;height:11.8px;box-sizing:border-box;border:2px solid #424242;border-radius:50%"></div>
<div id="t40" style="position:absolute;left:116.1px;top:897.68px;font-family:'Liberation Sans', sans-serif;font-size:19.2px;line-height:19.2px;color:#3b3b3b;font-weight:normal;white-space:pre;transform:scaleX(0.9932);transform-origin:left top;">Ruff: Organize imports</div>
<div id="t41" style="position:absolute;right:1291.8px;top:897.68px;font-family:'Liberation Sans', sans-serif;font-size:19.2px;line-height:19.2px;color:#8b8b8b;font-weight:normal;white-space:pre;transform:scaleX(1.0113);transform-origin:right top;">now</div>
<div style="position:absolute;left:89px;top:933.3px;width:11.8px;height:11.8px;box-sizing:border-box;border:2px solid #424242;border-radius:50%"></div>
<div id="t42" style="position:absolute;left:116.1px;top:930.28px;font-family:'Liberation Sans', sans-serif;font-size:19.2px;line-height:19.2px;color:#3b3b3b;font-weight:normal;white-space:pre;transform:scaleX(0.9244);transform-origin:left top;">File Saved</div>
<div style="position:absolute;left:89px;top:965.9px;width:11.8px;height:11.8px;box-sizing:border-box;border:2px solid #424242;border-radius:50%"></div>
<div id="t43" style="position:absolute;left:116.1px;top:962.88px;font-family:'Liberation Sans', sans-serif;font-size:19.2px;line-height:19.2px;color:#3b3b3b;font-weight:normal;white-space:pre;transform:scaleX(0.9932);transform-origin:left top;">Ruff: Organize imports</div>
<div id="t44" style="position:absolute;right:1291.8px;top:962.88px;font-family:'Liberation Sans', sans-serif;font-size:19.2px;line-height:19.2px;color:#8b8b8b;font-weight:normal;white-space:pre;transform:scaleX(0.9268);transform-origin:right top;">49 secs</div>
<div style="position:absolute;left:89px;top:998.5px;width:11.8px;height:11.8px;box-sizing:border-box;border:2px solid #424242;border-radius:50%"></div>
<div id="t45" style="position:absolute;left:116.1px;top:995.48px;font-family:'Liberation Sans', sans-serif;font-size:19.2px;line-height:19.2px;color:#3b3b3b;font-weight:normal;white-space:pre;transform:scaleX(0.9244);transform-origin:left top;">File Saved</div>
<div id="t46" style="position:absolute;right:1291.8px;top:995.48px;font-family:'Liberation Sans', sans-serif;font-size:19.2px;line-height:19.2px;color:#8b8b8b;font-weight:normal;white-space:pre;transform:scaleX(0.9803);transform-origin:right top;">2 mins</div>
<div style="position:absolute;left:89px;top:1031.1px;width:11.8px;height:11.8px;box-sizing:border-box;border:2px solid #424242;border-radius:50%"></div>
<div id="t47" style="position:absolute;left:116.1px;top:1028.08px;font-family:'Liberation Sans', sans-serif;font-size:19.2px;line-height:19.2px;color:#3b3b3b;font-weight:normal;white-space:pre;transform:scaleX(0.9244);transform-origin:left top;">File Saved</div>
<div id="t48" style="position:absolute;right:1291.8px;top:1028.08px;font-family:'Liberation Sans', sans-serif;font-size:19.2px;line-height:19.2px;color:#8b8b8b;font-weight:normal;white-space:pre;transform:scaleX(0.9909);transform-origin:right top;">4 mins</div>
<div style="position:absolute;left:89px;top:1063.7px;width:11.8px;height:11.8px;box-sizing:border-box;border:2px solid #424242;border-radius:50%"></div>
<div id="t49" style="position:absolute;left:116.1px;top:1060.68px;font-family:'Liberation Sans', sans-serif;font-size:19.2px;line-height:19.2px;color:#3b3b3b;font-weight:normal;white-space:pre;transform:scaleX(0.9244);transform-origin:left top;">File Saved</div>
<div id="t50" style="position:absolute;right:1291.8px;top:1060.68px;font-family:'Liberation Sans', sans-serif;font-size:19.2px;line-height:19.2px;color:#8b8b8b;font-weight:normal;white-space:pre;transform:scaleX(0.9803);transform-origin:right top;">8 mins</div>
<div style="position:absolute;left:481px;top:922px;width:1px;height:31px;background:#e4e4e4;"></div>
<div style="position:absolute;left:693px;top:52px;width:1px;height:51px;background:#e5e5e5;"></div>
<div style="position:absolute;left:1077px;top:52px;width:1px;height:51px;background:#e5e5e5;"></div>
<div style="position:absolute;left:1322px;top:52px;width:1px;height:51px;background:#e5e5e5;"></div>
<div style="position:absolute;left:1078px;top:52px;width:244px;height:52px;background:#ffffff;"></div>
<div style="position:absolute;left:1078px;top:52px;width:244px;height:2px;background:#005fb8;"></div>
<div style="position:absolute;left:515px;top:52px;width:178px;height:51px;overflow:hidden">
<div id="t51" style="position:absolute;left:-8px;top:18.58px;font-family:'Liberation Sans', sans-serif;font-size:19.2px;line-height:19.2px;color:#895503;font-weight:normal;white-space:pre;">_</div>
<div id="t52" style="position:absolute;left:2.2px;top:18.58px;font-family:'Liberation Sans', sans-serif;font-size:19.2px;line-height:19.2px;color:#895503;font-weight:normal;white-space:pre;transform:scaleX(0.9824);transform-origin:left top;">example.py</div>
<div id="t53" style="position:absolute;left:106.4px;top:19.43px;font-family:'Liberation Sans', sans-serif;font-size:18.2px;line-height:18.2px;color:#895503;font-weight:normal;white-space:pre;transform:scaleX(0.8783);transform-origin:left top;">2, U</div>
</div>
<svg style="position:absolute;left:715.5px;top:69.6px;" width="16" height="16" viewBox="0 0 16 16" fill="none"><path d="M7.9 0.5 C4.2 0.5 4.4 2.1 4.4 2.1 V3.8 H8 V4.4 H3 C3 4.4 0.5 4.1 0.5 7.9 C0.5 11.7 2.7 11.5 2.7 11.5 H4 V9.7 C4 9.7 3.9 7.5 6.2 7.5 H9.8 C9.8 7.5 11.9 7.6 11.9 5.4 V2.4 C11.9 2.4 12.2 0.5 7.9 0.5 Z M5.9 1.6 A0.65 0.65 0 1 1 5.9 2.9 A0.65 0.65 0 1 1 5.9 1.6 Z" fill="#3c78aa"/>
<path d="M8.1 15.5 C11.8 15.5 11.6 13.9 11.6 13.9 V12.2 H8 V11.6 H13 C13 11.6 15.5 11.9 15.5 8.1 C15.5 4.3 13.3 4.5 13.3 4.5 H12 V6.3 C12 6.3 12.1 8.5 9.8 8.5 H6.2 C6.2 8.5 4.1 8.4 4.1 10.6 V13.6 C4.1 13.6 3.8 15.5 8.1 15.5 Z M10.1 14.4 A0.65 0.65 0 1 1 10.1 13.1 A0.65 0.65 0 1 1 10.1 14.4 Z" fill="#3c78aa"/></svg>
<div id="t54" style="position:absolute;left:741.9px;top:70.58px;font-family:'Liberation Sans', sans-serif;font-size:19.2px;line-height:19.2px;color:#895503;font-weight:normal;white-space:pre;transform:scaleX(0.9788);transform-origin:left top;">student_example.py</div>
<div id="t55" style="position:absolute;left:919.8px;top:72.28px;font-family:'Liberation Sans', sans-serif;font-size:17.2px;line-height:17.2px;color:#895503;font-weight:normal;white-space:pre;transform:scaleX(0.9424);transform-origin:left top;opacity:0.85;">Lab G • src</div>
<div id="t56" style="position:absolute;left:1008.4px;top:71.43px;font-family:'Liberation Sans', sans-serif;font-size:18.2px;line-height:18.2px;color:#895503;font-weight:normal;white-space:pre;transform:scaleX(0.8274);transform-origin:left top;">1, U</div>
<svg style="position:absolute;left:1099.6px;top:69.6px;" width="16" height="16" viewBox="0 0 16 16" fill="none"><path d="M7.9 0.5 C4.2 0.5 4.4 2.1 4.4 2.1 V3.8 H8 V4.4 H3 C3 4.4 0.5 4.1 0.5 7.9 C0.5 11.7 2.7 11.5 2.7 11.5 H4 V9.7 C4 9.7 3.9 7.5 6.2 7.5 H9.8 C9.8 7.5 11.9 7.6 11.9 5.4 V2.4 C11.9 2.4 12.2 0.5 7.9 0.5 Z M5.9 1.6 A0.65 0.65 0 1 1 5.9 2.9 A0.65 0.65 0 1 1 5.9 1.6 Z" fill="#3c78aa"/>
<path d="M8.1 15.5 C11.8 15.5 11.6 13.9 11.6 13.9 V12.2 H8 V11.6 H13 C13 11.6 15.5 11.9 15.5 8.1 C15.5 4.3 13.3 4.5 13.3 4.5 H12 V6.3 C12 6.3 12.1 8.5 9.8 8.5 H6.2 C6.2 8.5 4.1 8.4 4.1 10.6 V13.6 C4.1 13.6 3.8 15.5 8.1 15.5 Z M10.1 14.4 A0.65 0.65 0 1 1 10.1 13.1 A0.65 0.65 0 1 1 10.1 14.4 Z" fill="#3c78aa"/></svg>
<div id="t57" style="position:absolute;left:1126px;top:70.58px;font-family:'Liberation Sans', sans-serif;font-size:19.2px;line-height:19.2px;color:#895503;font-weight:normal;white-space:pre;transform:scaleX(0.9211);transform-origin:left top;">my_classes.py</div>
<div id="t58" style="position:absolute;left:1250px;top:71.43px;font-family:'Liberation Sans', sans-serif;font-size:18.2px;line-height:18.2px;color:#895503;font-weight:normal;white-space:pre;transform:scaleX(0.9053);transform-origin:left top;">3, U</div>
<svg style="position:absolute;left:1293.5px;top:71.5px;" width="15" height="15" viewBox="0 0 15 15" fill="none"><path d="M1 1 L14 14 M14 1 L1 14" stroke="#3b3b3b" stroke-width="1.6" stroke-linecap="round"/></svg>
<svg style="position:absolute;left:1344px;top:69.6px;" width="16" height="16" viewBox="0 0 16 16" fill="none"><path d="M7.9 0.5 C4.2 0.5 4.4 2.1 4.4 2.1 V3.8 H8 V4.4 H3 C3 4.4 0.5 4.1 0.5 7.9 C0.5 11.7 2.7 11.5 2.7 11.5 H4 V9.7 C4 9.7 3.9 7.5 6.2 7.5 H9.8 C9.8 7.5 11.9 7.6 11.9 5.4 V2.4 C11.9 2.4 12.2 0.5 7.9 0.5 Z M5.9 1.6 A0.65 0.65 0 1 1 5.9 2.9 A0.65 0.65 0 1 1 5.9 1.6 Z" fill="#3c78aa"/>
<path d="M8.1 15.5 C11.8 15.5 11.6 13.9 11.6 13.9 V12.2 H8 V11.6 H13 C13 11.6 15.5 11.9 15.5 8.1 C15.5 4.3 13.3 4.5 13.3 4.5 H12 V6.3 C12 6.3 12.1 8.5 9.8 8.5 H6.2 C6.2 8.5 4.1 8.4 4.1 10.6 V13.6 C4.1 13.6 3.8 15.5 8.1 15.5 Z M10.1 14.4 A0.65 0.65 0 1 1 10.1 13.1 A0.65 0.65 0 1 1 10.1 14.4 Z" fill="#3c78aa"/></svg>
<div id="t59" style="position:absolute;left:1370.4px;top:70.58px;font-family:'Liberation Sans', sans-serif;font-size:19.2px;line-height:19.2px;color:#895503;font-weight:normal;white-space:pre;transform:scaleX(0.9771);transform-origin:left top;">student_example.py</div>
<div id="t60" style="position:absolute;left:1547.8px;top:72.28px;font-family:'Liberation Sans', sans-serif;font-size:17.2px;line-height:17.2px;color:#895503;font-weight:normal;white-space:pre;transform:scaleX(0.9417);transform-origin:left top;opacity:0.85;">Lab H</div>
<div style="position:absolute;left:1597px;top:52px;width:184px;height:51px;background:#f8f8f8;"></div>
<svg style="position:absolute;left:1605px;top:67px;" width="20" height="23" viewBox="0 0 20 23" fill="none"><path d="M3 4 Q3 2.6 4.3 3.3 L17 10.3 Q18.2 11.1 17 11.9 L4.3 19 Q3 19.7 3 18.3 Z" stroke="#3b3b3b" stroke-width="1.7" stroke-linejoin="round"/></svg>
<svg style="position:absolute;left:1631.5px;top:73.5px;" width="13" height="10" viewBox="0 0 13 10" fill="none"><path d="M1.5 2 L6.5 7.5 L11.5 2" stroke="#3b3b3b" stroke-width="1.5" stroke-linecap="round" stroke-linejoin="round"/></svg>
<svg style="position:absolute;left:1660px;top:66px;" width="25" height="25" viewBox="0 0 25 25" fill="none"><circle cx="5.4" cy="5.2" r="2.7" stroke="#3b3b3b" stroke-width="1.6"/><circle cx="18.4" cy="18.6" r="2.7" stroke="#3b3b3b" stroke-width="1.6"/>
<path d="M5.4 7.9 V15 Q5.4 18.1 8.5 18.1 H12.4 M9.7 14.9 L12.4 18.1 L9.7 21.3 M18.4 15.9 V9 Q18.4 5.2 15.1 5.2 H11.9 M14.6 2.5 L11.9 5.2 L14.6 7.9" stroke="#3b3b3b" stroke-width="1.6" stroke-linecap="round" stroke-linejoin="round"/></svg>
<svg style="position:absolute;left:1698px;top:66px;" width="25" height="25" viewBox="0 0 25 25" fill="none"><rect x="2" y="2.5" width="20.5" height="20" rx="3" stroke="#3b3b3b" stroke-width="1.7"/><path d="M2 12.5 H22.5" stroke="#3b3b3b" stroke-width="1.7"/></svg>
<div style="position:absolute;left:1741.2px;top:76.1px;width:3.4px;height:3.4px;background:#3b3b3b;border-radius:50%"></div>
<div style="position:absolute;left:1747.2px;top:76.1px;width:3.4px;height:3.4px;background:#3b3b3b;border-radius:50%"></div>
<div style="position:absolute;left:1753.2px;top:76.1px;width:3.4px;height:3.4px;background:#3b3b3b;border-radius:50%"></div>
<div id="t61" style="position:absolute;left:539.7px;top:112.28px;font-family:'Liberation Sans', sans-serif;font-size:19.2px;line-height:19.2px;color:#616161;font-weight:normal;white-space:pre;transform:scaleX(0.9218);transform-origin:left top;">Lab H</div>
<svg style="position:absolute;left:595px;top:113px;" width="11" height="17" viewBox="0 0 11 17" fill="none"><path d="M1.5 1.5 L9 8.5 L1.5 15.5" stroke="#616161" stroke-width="1.5" stroke-linecap="round" stroke-linejoin="round"/></svg>
<div id="t62" style="position:absolute;left:612.8px;top:112.28px;font-family:'Liberation Sans', sans-serif;font-size:19.2px;line-height:19.2px;color:#616161;font-weight:normal;white-space:pre;transform:scaleX(0.8562);transform-origin:left top;">src</div>
<svg style="position:absolute;left:642px;top:113px;" width="11" height="17" viewBox="0 0 11 17" fill="none"><path d="M1.5 1.5 L9 8.5 L1.5 15.5" stroke="#616161" stroke-width="1.5" stroke-linecap="round" stroke-linejoin="round"/></svg>
<svg style="position:absolute;left:665.7px;top:112.5px;" width="16" height="16" viewBox="0 0 16 16" fill="none"><path d="M7.9 0.5 C4.2 0.5 4.4 2.1 4.4 2.1 V3.8 H8 V4.4 H3 C3 4.4 0.5 4.1 0.5 7.9 C0.5 11.7 2.7 11.5 2.7 11.5 H4 V9.7 C4 9.7 3.9 7.5 6.2 7.5 H9.8 C9.8 7.5 11.9 7.6 11.9 5.4 V2.4 C11.9 2.4 12.2 0.5 7.9 0.5 Z M5.9 1.6 A0.65 0.65 0 1 1 5.9 2.9 A0.65 0.65 0 1 1 5.9 1.6 Z" fill="#3c78aa"/>
<path d="M8.1 15.5 C11.8 15.5 11.6 13.9 11.6 13.9 V12.2 H8 V11.6 H13 C13 11.6 15.5 11.9 15.5 8.1 C15.5 4.3 13.3 4.5 13.3 4.5 H12 V6.3 C12 6.3 12.1 8.5 9.8 8.5 H6.2 C6.2 8.5 4.1 8.4 4.1 10.6 V13.6 C4.1 13.6 3.8 15.5 8.1 15.5 Z M10.1 14.4 A0.65 0.65 0 1 1 10.1 13.1 A0.65 0.65 0 1 1 10.1 14.4 Z" fill="#3c78aa"/></svg>
<div id="t63" style="position:absolute;left:692.6px;top:112.28px;font-family:'Liberation Sans', sans-serif;font-size:19.2px;line-height:19.2px;color:#616161;font-weight:normal;white-space:pre;transform:scaleX(0.9171);transform-origin:left top;">my_classes.py</div>
<svg style="position:absolute;left:815.5px;top:113px;" width="11" height="17" viewBox="0 0 11 17" fill="none"><path d="M1.5 1.5 L9 8.5 L1.5 15.5" stroke="#616161" stroke-width="1.5" stroke-linecap="round" stroke-linejoin="round"/></svg>
<div id="t64" style="position:absolute;left:833.3px;top:112.28px;font-family:'Liberation Sans', sans-serif;font-size:19.2px;line-height:19.2px;color:#616161;font-weight:normal;white-space:pre;transform:scaleX(0.7375);transform-origin:left top;">...</div>
<div style="position:absolute;left:616px;top:221px;width:1044px;height:28px;box-sizing:border-box;border-top:2px solid #eeeeee;border-bottom:2px solid #eeeeee"></div>
<div style="position:absolute;left:515px;top:104px;width:1150px;height:760px;overflow:hidden">
<div id="t65" style="position:absolute;left:63.5px;top:38.86px;font-family:'Liberation Mono', monospace;font-size:19px;line-height:19px;color:#6e7681;font-weight:normal;white-space:pre;width:50px;text-align:right;left:13.5px;">1</div>
<div id="t66" style="position:absolute;left:101px;top:38.86px;font-family:'Liberation Mono', monospace;font-size:19px;line-height:19px;color:#000000;font-weight:normal;white-space:pre;"><span style="color:#af00db">import</span> <span style="color:#267f99">sys</span></div>
<div id="t67" style="position:absolute;left:63.5px;top:66.96px;font-family:'Liberation Mono', monospace;font-size:19px;line-height:19px;color:#6e7681;font-weight:normal;white-space:pre;width:50px;text-align:right;left:13.5px;">2</div>
<div id="t68" style="position:absolute;left:63.5px;top:95.06px;font-family:'Liberation Mono', monospace;font-size:19px;line-height:19px;color:#6e7681;font-weight:normal;white-space:pre;width:50px;text-align:right;left:13.5px;">3</div>
<div id="t69" style="position:absolute;left:101px;top:95.06px;font-family:'Liberation Mono', monospace;font-size:19px;line-height:19px;color:#000000;font-weight:normal;white-space:pre;"><span style="color:#af00db">import</span> <span style="color:#1f1f1f">numpy</span> <span style="color:#af00db">as</span> <span style="color:#267f99">np</span></div>
<div id="t70" style="position:absolute;left:63.5px;top:123.16px;font-family:'Liberation Mono', monospace;font-size:19px;line-height:19px;color:#171184;font-weight:normal;white-space:pre;width:50px;text-align:right;left:13.5px;">4</div>
<div id="t71" style="position:absolute;left:63.5px;top:174.86px;font-family:'Liberation Mono', monospace;font-size:19px;line-height:19px;color:#6e7681;font-weight:normal;white-space:pre;width:50px;text-align:right;left:13.5px;">5</div>
<div id="t72" style="position:absolute;left:101px;top:174.86px;font-family:'Liberation Mono', monospace;font-size:19px;line-height:19px;color:#000000;font-weight:normal;white-space:pre;"><span style="color:#008000"># %% Define constants for valid mark ranges</span></div>
<div id="t73" style="position:absolute;left:63.5px;top:202.96px;font-family:'Liberation Mono', monospace;font-size:19px;line-height:19px;color:#6e7681;font-weight:normal;white-space:pre;width:50px;text-align:right;left:13.5px;">6</div>
<div id="t74" style="position:absolute;left:101px;top:202.96px;font-family:'Liberation Mono', monospace;font-size:19px;line-height:19px;color:#000000;font-weight:normal;white-space:pre;"><span style="color:#0070c1">EXAM_MARK_MIN</span><span style="color:#000000"> = </span><span style="color:#098658">0</span></div>
<div id="t75" style="position:absolute;left:63.5px;top:231.06px;font-family:'Liberation Mono', monospace;font-size:19px;line-height:19px;color:#6e7681;font-weight:normal;white-space:pre;width:50px;text-align:right;left:13.5px;">7</div>
<div id="t76" style="position:absolute;left:101px;top:231.06px;font-family:'Liberation Mono', monospace;font-size:19px;line-height:19px;color:#000000;font-weight:normal;white-space:pre;"><span style="color:#0070c1">EXAM_MARK_MAX</span><span style="color:#000000"> = </span><span style="color:#098658">100</span></div>
<div id="t77" style="position:absolute;left:63.5px;top:259.16px;font-family:'Liberation Mono', monospace;font-size:19px;line-height:19px;color:#6e7681;font-weight:normal;white-space:pre;width:50px;text-align:right;left:13.5px;">8</div>
<div id="t78" style="position:absolute;left:101px;top:259.16px;font-family:'Liberation Mono', monospace;font-size:19px;line-height:19px;color:#000000;font-weight:normal;white-space:pre;"><span style="color:#0070c1">ASSIGNMENT_MARK_MIN</span><span style="color:#000000"> = </span><span style="color:#098658">0</span></div>
<div id="t79" style="position:absolute;left:63.5px;top:287.26px;font-family:'Liberation Mono', monospace;font-size:19px;line-height:19px;color:#6e7681;font-weight:normal;white-space:pre;width:50px;text-align:right;left:13.5px;">9</div>
<div id="t80" style="position:absolute;left:101px;top:287.26px;font-family:'Liberation Mono', monospace;font-size:19px;line-height:19px;color:#000000;font-weight:normal;white-space:pre;"><span style="color:#0070c1">ASSIGNMENT_MARK_MAX</span><span style="color:#000000"> = </span><span style="color:#098658">5</span></div>
<div id="t81" style="position:absolute;left:63.5px;top:315.36px;font-family:'Liberation Mono', monospace;font-size:19px;line-height:19px;color:#6e7681;font-weight:normal;white-space:pre;width:50px;text-align:right;left:13.5px;">10</div>
<div id="t82" style="position:absolute;left:63.5px;top:343.46px;font-family:'Liberation Mono', monospace;font-size:19px;line-height:19px;color:#6e7681;font-weight:normal;white-space:pre;width:50px;text-align:right;left:13.5px;">11</div>
<div id="t83" style="position:absolute;left:63.5px;top:395.46px;font-family:'Liberation Mono', monospace;font-size:19px;line-height:19px;color:#6e7681;font-weight:normal;white-space:pre;width:50px;text-align:right;left:13.5px;">12</div>
<div id="t84" style="position:absolute;left:101px;top:395.46px;font-family:'Liberation Mono', monospace;font-size:19px;line-height:19px;color:#000000;font-weight:normal;white-space:pre;"><span style="color:#008000"># %% Set up custom exceptions and error checking functions</span></div>
<div id="t85" style="position:absolute;left:63.5px;top:423.54px;font-family:'Liberation Mono', monospace;font-size:19px;line-height:19px;color:#6e7681;font-weight:normal;white-space:pre;width:50px;text-align:right;left:13.5px;">13</div>
<div id="t86" style="position:absolute;left:101px;top:423.54px;font-family:'Liberation Mono', monospace;font-size:19px;line-height:19px;color:#000000;font-weight:normal;white-space:pre;"><span style="color:#008000"># These are called from the object classes below</span></div>
<div id="t87" style="position:absolute;left:63.5px;top:451.62px;font-family:'Liberation Mono', monospace;font-size:19px;line-height:19px;color:#6e7681;font-weight:normal;white-space:pre;width:50px;text-align:right;left:13.5px;">14</div>
<div id="t88" style="position:absolute;left:101px;top:451.62px;font-family:'Liberation Mono', monospace;font-size:19px;line-height:19px;color:#000000;font-weight:normal;white-space:pre;"><span style="color:#0000ff">class</span> <span style="color:#267f99">MarkIsText</span><span style="color:#0431fa">(</span><span style="color:#267f99">Exception</span><span style="color:#0431fa">)</span><span style="color:#000000">:</span></div>
<div id="t89" style="position:absolute;left:63.5px;top:479.70px;font-family:'Liberation Mono', monospace;font-size:19px;line-height:19px;color:#6e7681;font-weight:normal;white-space:pre;width:50px;text-align:right;left:13.5px;">15</div>
<div id="t90" style="position:absolute;left:101px;top:479.70px;font-family:'Liberation Mono', monospace;font-size:19px;line-height:19px;color:#000000;font-weight:normal;white-space:pre;">    <span style="color:#a31515">"""Error with exam mark not being a number"""</span></div>
<div id="t91" style="position:absolute;left:63.5px;top:507.78px;font-family:'Liberation Mono', monospace;font-size:19px;line-height:19px;color:#6e7681;font-weight:normal;white-space:pre;width:50px;text-align:right;left:13.5px;">16</div>
<div id="t92" style="position:absolute;left:63.5px;top:535.86px;font-family:'Liberation Mono', monospace;font-size:19px;line-height:19px;color:#6e7681;font-weight:normal;white-space:pre;width:50px;text-align:right;left:13.5px;">17</div>
<div id="t93" style="position:absolute;left:101px;top:535.86px;font-family:'Liberation Mono', monospace;font-size:19px;line-height:19px;color:#000000;font-weight:normal;white-space:pre;">    <span style="color:#af00db">pass</span></div>
<div id="t94" style="position:absolute;left:63.5px;top:563.94px;font-family:'Liberation Mono', monospace;font-size:19px;line-height:19px;color:#6e7681;font-weight:normal;white-space:pre;width:50px;text-align:right;left:13.5px;">18</div>
<div id="t95" style="position:absolute;left:63.5px;top:592.02px;font-family:'Liberation Mono', monospace;font-size:19px;line-height:19px;color:#6e7681;font-weight:normal;white-space:pre;width:50px;text-align:right;left:13.5px;">19</div>
<div id="t96" style="position:absolute;left:63.5px;top:620.10px;font-family:'Liberation Mono', monospace;font-size:19px;line-height:19px;color:#6e7681;font-weight:normal;white-space:pre;width:50px;text-align:right;left:13.5px;">20</div>
<div id="t97" style="position:absolute;left:101px;top:620.10px;font-family:'Liberation Mono', monospace;font-size:19px;line-height:19px;color:#000000;font-weight:normal;white-space:pre;"><span style="color:#0000ff">class</span> <span style="color:#267f99">ExamMarkOutOfRange</span><span style="color:#0431fa">(</span><span style="color:#267f99">Exception</span><span style="color:#0431fa">)</span><span style="color:#000000">:</span></div>
<div id="t98" style="position:absolute;left:63.5px;top:648.18px;font-family:'Liberation Mono', monospace;font-size:19px;line-height:19px;color:#6e7681;font-weight:normal;white-space:pre;width:50px;text-align:right;left:13.5px;">21</div>
<div id="t99" style="position:absolute;left:101px;top:648.18px;font-family:'Liberation Mono', monospace;font-size:19px;line-height:19px;color:#000000;font-weight:normal;white-space:pre;">    <span style="color:#a31515">"""Error with exam mark not being between 0 and 100"""</span></div>
<div id="t100" style="position:absolute;left:63.5px;top:676.26px;font-family:'Liberation Mono', monospace;font-size:19px;line-height:19px;color:#6e7681;font-weight:normal;white-space:pre;width:50px;text-align:right;left:13.5px;">22</div>
<div id="t101" style="position:absolute;left:63.5px;top:704.34px;font-family:'Liberation Mono', monospace;font-size:19px;line-height:19px;color:#6e7681;font-weight:normal;white-space:pre;width:50px;text-align:right;left:13.5px;">23</div>
<div id="t102" style="position:absolute;left:101px;top:704.34px;font-family:'Liberation Mono', monospace;font-size:19px;line-height:19px;color:#000000;font-weight:normal;white-space:pre;">    <span style="color:#af00db">pass</span></div>
<div id="t103" style="position:absolute;left:63.5px;top:732.42px;font-family:'Liberation Mono', monospace;font-size:19px;line-height:19px;color:#6e7681;font-weight:normal;white-space:pre;width:50px;text-align:right;left:13.5px;">24</div>
<div id="t104" style="position:absolute;left:101px;top:148.90px;font-family:'Liberation Sans', sans-serif;font-size:18px;line-height:18px;color:#919191;font-weight:normal;white-space:pre;transform:scaleX(0.9545);transform-origin:left top;">Run Cell | Run Below | Debug Cell</div>
<div id="t105" style="position:absolute;left:101px;top:370.90px;font-family:'Liberation Sans', sans-serif;font-size:18px;line-height:18px;color:#919191;font-weight:normal;white-space:pre;transform:scaleX(0.9618);transform-origin:left top;">Run Cell | Run Above | Debug Cell</div>
</div>
<div style="position:absolute;left:616px;top:222px;width:2.6px;height:26px;background:#000000;"></div>
<div style="position:absolute;left:616.5px;top:577px;width:1.3px;height:86px;background:#d3d3d3;"></div>
<div style="position:absolute;left:616.5px;top:746px;width:1.3px;height:86px;background:#d3d3d3;"></div>
<svg style="position:absolute;left:695px;top:214px;" width="60" height="10" viewBox="0 0 60 10" fill="none"><path d="M1.3 6.6 Q3.55 0.4 5.80 4.5 Q8.05 8.6 10.30 4.5 Q12.55 0.4 14.80 4.5 Q17.05 8.6 19.30 4.5 Q21.55 0.4 23.80 4.5 Q26.05 8.6 28.30 4.5 Q30.55 0.4 32.80 4.5 Q35.05 8.6 37.30 4.5 Q39.55 0.4 41.80 4.5 Q44.05 8.6 46.30 4.5 Q48.55 0.4 50.80 4.5 Q53.05 8.6 55.30 4.5" stroke="#bf8803" stroke-width="1.6"/></svg>
<svg style="position:absolute;left:1668px;top:136px" width="95" height="320" viewBox="0 0 95 320"><rect x="0.3" y="0.40" width="6" height="1.3" fill="#af00db" opacity="0.5"/><rect x="6.3" y="0.40" width="1" height="1.3" fill="#3b3b3b" opacity="0.2"/><rect x="7.3" y="0.40" width="3" height="1.3" fill="#267f99" opacity="0.5"/><rect x="0" y="4.36" width="94.5" height="2.2" fill="#e2b447"/><rect x="0.3" y="4.46" width="6" height="1.3" fill="#af00db" opacity="0.5"/><rect x="6.3" y="4.46" width="1" height="1.3" fill="#3b3b3b" opacity="0.2"/><rect x="7.3" y="4.46" width="5" height="1.3" fill="#001080" opacity="0.5"/><rect x="12.3" y="4.46" width="1" height="1.3" fill="#3b3b3b" opacity="0.2"/><rect x="13.3" y="4.46" width="2" height="1.3" fill="#af00db" opacity="0.5"/><rect x="15.3" y="4.46" width="1" height="1.3" fill="#3b3b3b" opacity="0.2"/><rect x="16.3" y="4.46" width="2" height="1.3" fill="#267f99" opacity="0.5"/><rect x="0.3" y="6.49" width="43" height="1.3" fill="#008000" opacity="0.5"/><rect x="0.3" y="8.52" width="13" height="1.3" fill="#0070c1" opacity="0.5"/><rect x="13.3" y="8.52" width="3" height="1.3" fill="#3b3b3b" opacity="0.2"/><rect x="16.3" y="8.52" width="1" height="1.3" fill="#098658" opacity="0.5"/><rect x="0.3" y="10.55" width="13" height="1.3" fill="#0070c1" opacity="0.5"/><rect x="13.3" y="10.55" width="3" height="1.3" fill="#3b3b3b" opacity="0.2"/><rect x="16.3" y="10.55" width="3" height="1.3" fill="#098658" opacity="0.5"/><rect x="0.3" y="12.58" width="19" height="1.3" fill="#0070c1" opacity="0.5"/><rect x="19.3" y="12.58" width="3" height="1.3" fill="#3b3b3b" opacity="0.2"/><rect x="22.3" y="12.58" width="1" height="1.3" fill="#098658" opacity="0.5"/><rect x="0.3" y="14.61" width="19" height="1.3" fill="#0070c1" opacity="0.5"/><rect x="19.3" y="14.61" width="3" height="1.3" fill="#3b3b3b" opacity="0.2"/><rect x="22.3" y="14.61" width="1" height="1.3" fill="#098658" opacity="0.5"/><rect x="0.3" y="20.70" width="58" height="1.3" fill="#008000" opacity="0.5"/><rect x="0.3" y="22.73" width="48" height="1.3" fill="#008000" opacity="0.5"/><rect x="0.3" y="24.76" width="5" height="1.3" fill="#0000ff" opacity="0.5"/><rect x="5.3" y="24.76" width="1" height="1.3" fill="#3b3b3b" opacity="0.2"/><rect x="6.3" y="24.76" width="10" height="1.3" fill="#267f99" opacity="0.5"/><rect x="16.3" y="24.76" width="1" height="1.3" fill="#3b3b3b" opacity="0.2"/><rect x="17.3" y="24.76" width="9" height="1.3" fill="#267f99" opacity="0.5"/><rect x="26.3" y="24.76" width="2" height="1.3" fill="#3b3b3b" opacity="0.2"/><rect x="4.3" y="26.79" width="46" height="1.3" fill="#a31515" opacity="0.5"/><rect x="4.3" y="30.85" width="4" height="1.3" fill="#af00db" opacity="0.5"/><rect x="0.3" y="36.94" width="5" height="1.3" fill="#0000ff" opacity="0.5"/><rect x="5.3" y="36.94" width="1" height="1.3" fill="#3b3b3b" opacity="0.2"/><rect x="6.3" y="36.94" width="18" height="1.3" fill="#267f99" opacity="0.5"/><rect x="24.3" y="36.94" width="1" height="1.3" fill="#3b3b3b" opacity="0.2"/><rect x="25.3" y="36.94" width="9" height="1.3" fill="#267f99" opacity="0.5"/><rect x="34.3" y="36.94" width="2" height="1.3" fill="#3b3b3b" opacity="0.2"/><rect x="4.3" y="38.97" width="54" height="1.3" fill="#a31515" opacity="0.5"/><rect x="4.3" y="43.03" width="4" height="1.3" fill="#af00db" opacity="0.5"/><rect x="0.3" y="49.12" width="5" height="1.3" fill="#0000ff" opacity="0.5"/><rect x="5.3" y="49.12" width="1" height="1.3" fill="#3b3b3b" opacity="0.2"/><rect x="6.3" y="49.12" width="24" height="1.3" fill="#267f99" opacity="0.5"/><rect x="30.3" y="49.12" width="1" height="1.3" fill="#3b3b3b" opacity="0.2"/><rect x="31.3" y="49.12" width="9" height="1.3" fill="#267f99" opacity="0.5"/><rect x="40.3" y="49.12" width="2" height="1.3" fill="#3b3b3b" opacity="0.2"/><rect x="4.3" y="51.15" width="62" height="1.3" fill="#a31515" opacity="0.5"/><rect x="4.3" y="55.21" width="4" height="1.3" fill="#af00db" opacity="0.5"/><rect x="0.3" y="61.30" width="3" height="1.3" fill="#0000ff" opacity="0.5"/><rect x="3.3" y="61.30" width="1" height="1.3" fill="#3b3b3b" opacity="0.2"/><rect x="4.3" y="61.30" width="21" height="1.3" fill="#795e26" opacity="0.5"/><rect x="25.3" y="61.30" width="6" height="1.3" fill="#001080" opacity="0.5"/><rect x="31.3" y="61.30" width="2" height="1.3" fill="#3b3b3b" opacity="0.2"/><rect x="4.3" y="63.33" width="2" height="1.3" fill="#af00db" opacity="0.5"/><rect x="6.3" y="63.33" width="1" height="1.3" fill="#3b3b3b" opacity="0.2"/><rect x="7.3" y="63.33" width="10" height="1.3" fill="#795e26" opacity="0.5"/><rect x="17.3" y="63.33" width="4" height="1.3" fill="#001080" opacity="0.5"/><rect x="21.3" y="63.33" width="1" height="1.3" fill="#3b3b3b" opacity="0.2"/><rect x="22.3" y="63.33" width="5" height="1.3" fill="#267f99" opacity="0.5"/><rect x="27.3" y="63.33" width="2" height="1.3" fill="#3b3b3b" opacity="0.2"/><rect x="8.3" y="65.36" width="5" height="1.3" fill="#af00db" opacity="0.5"/><rect x="13.3" y="65.36" width="1" height="1.3" fill="#3b3b3b" opacity="0.2"/><rect x="14.3" y="65.36" width="10" height="1.3" fill="#267f99" opacity="0.5"/><rect x="24.3" y="65.36" width="1" height="1.3" fill="#3b3b3b" opacity="0.2"/><rect x="25.3" y="65.36" width="27" height="1.3" fill="#a31515" opacity="0.5"/><rect x="52.3" y="65.36" width="1" height="1.3" fill="#3b3b3b" opacity="0.2"/><rect x="4.3" y="67.39" width="2" height="1.3" fill="#af00db" opacity="0.5"/><rect x="6.3" y="67.39" width="1" height="1.3" fill="#3b3b3b" opacity="0.2"/><rect x="7.3" y="67.39" width="1" height="1.3" fill="#0070c1" opacity="0.5"/><rect x="8.3" y="67.39" width="4" height="1.3" fill="#001080" opacity="0.5"/><rect x="12.3" y="67.39" width="1" height="1.3" fill="#3b3b3b" opacity="0.2"/><rect x="13.3" y="67.39" width="13" height="1.3" fill="#0070c1" opacity="0.5"/><rect x="26.3" y="67.39" width="4" height="1.3" fill="#3b3b3b" opacity="0.2"/><rect x="30.3" y="67.39" width="4" height="1.3" fill="#001080" opacity="0.5"/><rect x="34.3" y="67.39" width="1" height="1.3" fill="#3b3b3b" opacity="0.2"/><rect x="35.3" y="67.39" width="13" height="1.3" fill="#0070c1" opacity="0.5"/><rect x="48.3" y="67.39" width="2" height="1.3" fill="#3b3b3b" opacity="0.2"/><rect x="8.3" y="69.42" width="5" height="1.3" fill="#af00db" opacity="0.5"/><rect x="13.3" y="69.42" width="1" height="1.3" fill="#3b3b3b" opacity="0.2"/><rect x="14.3" y="69.42" width="18" height="1.3" fill="#267f99" opacity="0.5"/><rect x="32.3" y="69.42" width="1" height="1.3" fill="#3b3b3b" opacity="0.2"/><rect x="12.3" y="71.45" width="26" height="1.3" fill="#a31515" opacity="0.5"/><rect x="38.3" y="71.45" width="13" height="1.3" fill="#0070c1" opacity="0.5"/><rect x="51.3" y="71.45" width="5" height="1.3" fill="#a31515" opacity="0.5"/><rect x="56.3" y="71.45" width="13" height="1.3" fill="#0070c1" opacity="0.5"/><rect x="69.3" y="71.45" width="2" height="1.3" fill="#a31515" opacity="0.5"/><rect x="8.3" y="73.48" width="1" height="1.3" fill="#3b3b3b" opacity="0.2"/><rect x="4.3" y="75.51" width="2" height="1.3" fill="#af00db" opacity="0.5"/><rect x="6.3" y="75.51" width="1" height="1.3" fill="#3b3b3b" opacity="0.2"/><rect x="7.3" y="75.51" width="10" height="1.3" fill="#795e26" opacity="0.5"/><rect x="17.3" y="75.51" width="4" height="1.3" fill="#001080" opacity="0.5"/><rect x="21.3" y="75.51" width="2" height="1.3" fill="#3b3b3b" opacity="0.2"/><rect x="23.3" y="75.51" width="3" height="1.3" fill="#267f99" opacity="0.5"/><rect x="26.3" y="75.51" width="2" height="1.3" fill="#3b3b3b" opacity="0.2"/><rect x="8.3" y="77.54" width="5" height="1.3" fill="#af00db" opacity="0.5"/><rect x="13.3" y="77.54" width="1" height="1.3" fill="#3b3b3b" opacity="0.2"/><rect x="14.3" y="77.54" width="10" height="1.3" fill="#267f99" opacity="0.5"/><rect x="24.3" y="77.54" width="1" height="1.3" fill="#3b3b3b" opacity="0.2"/><rect x="25.3" y="77.54" width="28" height="1.3" fill="#a31515" opacity="0.5"/><rect x="53.3" y="77.54" width="1" height="1.3" fill="#3b3b3b" opacity="0.2"/><rect x="0.3" y="83.63" width="3" height="1.3" fill="#0000ff" opacity="0.5"/><rect x="3.3" y="83.63" width="1" height="1.3" fill="#3b3b3b" opacity="0.2"/><rect x="4.3" y="83.63" width="27" height="1.3" fill="#795e26" opacity="0.5"/><rect x="31.3" y="83.63" width="6" height="1.3" fill="#001080" opacity="0.5"/><rect x="37.3" y="83.63" width="2" height="1.3" fill="#3b3b3b" opacity="0.2"/><rect x="4.3" y="85.66" width="90" height="1.3" fill="#008000" opacity="0.5"/><rect x="4.3" y="87.69" width="90" height="1.3" fill="#008000" opacity="0.5"/><rect x="4.3" y="89.72" width="2" height="1.3" fill="#af00db" opacity="0.5"/><rect x="6.3" y="89.72" width="1" height="1.3" fill="#3b3b3b" opacity="0.2"/><rect x="7.3" y="89.72" width="10" height="1.3" fill="#795e26" opacity="0.5"/><rect x="17.3" y="89.72" width="4" height="1.3" fill="#001080" opacity="0.5"/><rect x="21.3" y="89.72" width="1" height="1.3" fill="#3b3b3b" opacity="0.2"/><rect x="22.3" y="89.72" width="3" height="1.3" fill="#267f99" opacity="0.5"/><rect x="25.3" y="89.72" width="2" height="1.3" fill="#3b3b3b" opacity="0.2"/><rect x="8.3" y="91.75" width="5" height="1.3" fill="#af00db" opacity="0.5"/><rect x="13.3" y="91.75" width="1" height="1.3" fill="#3b3b3b" opacity="0.2"/><rect x="14.3" y="91.75" width="10" height="1.3" fill="#267f99" opacity="0.5"/><rect x="24.3" y="91.75" width="1" height="1.3" fill="#3b3b3b" opacity="0.2"/><rect x="25.3" y="91.75" width="28" height="1.3" fill="#a31515" opacity="0.5"/><rect x="53.3" y="91.75" width="1" height="1.3" fill="#3b3b3b" opacity="0.2"/><rect x="4.3" y="93.78" width="11" height="1.3" fill="#001080" opacity="0.5"/><rect x="15.3" y="93.78" width="3" height="1.3" fill="#3b3b3b" opacity="0.2"/><rect x="18.3" y="93.78" width="5" height="1.3" fill="#267f99" opacity="0.5"/><rect x="23.3" y="93.78" width="3" height="1.3" fill="#3b3b3b" opacity="0.2"/><rect x="8.3" y="95.81" width="19" height="1.3" fill="#0070c1" opacity="0.5"/><rect x="27.3" y="95.81" width="2" height="1.3" fill="#3b3b3b" opacity="0.2"/><rect x="29.3" y="95.81" width="19" height="1.3" fill="#0070c1" opacity="0.5"/><rect x="48.3" y="95.81" width="4" height="1.3" fill="#3b3b3b" opacity="0.2"/><rect x="4.3" y="97.84" width="1" height="1.3" fill="#3b3b3b" opacity="0.2"/><rect x="5.3" y="97.84" width="24" height="1.3" fill="#008000" opacity="0.5"/><rect x="4.3" y="99.87" width="2" height="1.3" fill="#af00db" opacity="0.5"/><rect x="6.3" y="99.87" width="1" height="1.3" fill="#3b3b3b" opacity="0.2"/><rect x="7.3" y="99.87" width="4" height="1.3" fill="#001080" opacity="0.5"/><rect x="11.3" y="99.87" width="1" height="1.3" fill="#3b3b3b" opacity="0.2"/><rect x="12.3" y="99.87" width="3" height="1.3" fill="#af00db" opacity="0.5"/><rect x="15.3" y="99.87" width="4" height="1.3" fill="#3b3b3b" opacity="0.2"/><rect x="19.3" y="99.87" width="11" height="1.3" fill="#001080" opacity="0.5"/><rect x="30.3" y="99.87" width="1" height="1.3" fill="#3b3b3b" opacity="0.2"/><rect x="8.3" y="101.90" width="5" height="1.3" fill="#af00db" opacity="0.5"/><rect x="13.3" y="101.90" width="1" height="1.3" fill="#3b3b3b" opacity="0.2"/><rect x="14.3" y="101.90" width="24" height="1.3" fill="#267f99" opacity="0.5"/><rect x="38.3" y="101.90" width="1" height="1.3" fill="#3b3b3b" opacity="0.2"/><rect x="12.3" y="103.93" width="30" height="1.3" fill="#a31515" opacity="0.5"/><rect x="42.3" y="103.93" width="19" height="1.3" fill="#0070c1" opacity="0.5"/><rect x="61.3" y="103.93" width="5" height="1.3" fill="#a31515" opacity="0.5"/><rect x="66.3" y="103.93" width="19" height="1.3" fill="#0070c1" opacity="0.5"/><rect x="85.3" y="103.93" width="2" height="1.3" fill="#a31515" opacity="0.5"/><rect x="8.3" y="105.96" width="1" height="1.3" fill="#3b3b3b" opacity="0.2"/><rect x="4.3" y="107.99" width="2" height="1.3" fill="#af00db" opacity="0.5"/><rect x="6.3" y="107.99" width="1" height="1.3" fill="#3b3b3b" opacity="0.2"/><rect x="7.3" y="107.99" width="10" height="1.3" fill="#795e26" opacity="0.5"/><rect x="17.3" y="107.99" width="4" height="1.3" fill="#001080" opacity="0.5"/><rect x="21.3" y="107.99" width="2" height="1.3" fill="#3b3b3b" opacity="0.2"/><rect x="23.3" y="107.99" width="3" height="1.3" fill="#267f99" opacity="0.5"/><rect x="26.3" y="107.99" width="2" height="1.3" fill="#3b3b3b" opacity="0.2"/><rect x="8.3" y="110.02" width="5" height="1.3" fill="#af00db" opacity="0.5"/><rect x="13.3" y="110.02" width="1" height="1.3" fill="#3b3b3b" opacity="0.2"/><rect x="14.3" y="110.02" width="10" height="1.3" fill="#267f99" opacity="0.5"/><rect x="24.3" y="110.02" width="1" height="1.3" fill="#3b3b3b" opacity="0.2"/><rect x="25.3" y="110.02" width="28" height="1.3" fill="#a31515" opacity="0.5"/><rect x="53.3" y="110.02" width="1" height="1.3" fill="#3b3b3b" opacity="0.2"/><rect x="0.3" y="116.11" width="19" height="1.3" fill="#008000" opacity="0.5"/><rect x="0.3" y="118.14" width="5" height="1.3" fill="#0000ff" opacity="0.5"/><rect x="5.3" y="118.14" width="1" height="1.3" fill="#3b3b3b" opacity="0.2"/><rect x="6.3" y="118.14" width="13" height="1.3" fill="#267f99" opacity="0.5"/><rect x="19.3" y="118.14" width="1" height="1.3" fill="#3b3b3b" opacity="0.2"/><rect x="4.3" y="120.17" width="3" height="1.3" fill="#a31515" opacity="0.5"/><rect x="4.3" y="122.20" width="38" height="1.3" fill="#a31515" opacity="0.5"/><rect x="4.3" y="124.23" width="3" height="1.3" fill="#a31515" opacity="0.5"/><rect x="4.3" y="128.29" width="3" height="1.3" fill="#0000ff" opacity="0.5"/><rect x="7.3" y="128.29" width="1" height="1.3" fill="#3b3b3b" opacity="0.2"/><rect x="8.3" y="128.29" width="8" height="1.3" fill="#795e26" opacity="0.5"/><rect x="16.3" y="128.29" width="4" height="1.3" fill="#001080" opacity="0.5"/><rect x="20.3" y="128.29" width="2" height="1.3" fill="#3b3b3b" opacity="0.2"/><rect x="8.3" y="130.32" width="4" height="1.3" fill="#001080" opacity="0.5"/><rect x="12.3" y="130.32" width="1" height="1.3" fill="#3b3b3b" opacity="0.2"/><rect x="13.3" y="130.32" width="5" height="1.3" fill="#001080" opacity="0.5"/><rect x="18.3" y="130.32" width="3" height="1.3" fill="#3b3b3b" opacity="0.2"/><rect x="21.3" y="130.32" width="3" height="1.3" fill="#267f99" opacity="0.5"/><rect x="24.3" y="130.32" width="1" height="1.3" fill="#3b3b3b" opacity="0.2"/><rect x="25.3" y="130.32" width="3" height="1.3" fill="#001080" opacity="0.5"/><rect x="4.3" y="134.38" width="3" height="1.3" fill="#0000ff" opacity="0.5"/><rect x="7.3" y="134.38" width="1" height="1.3" fill="#3b3b3b" opacity="0.2"/><rect x="8.3" y="134.38" width="7" height="1.3" fill="#795e26" opacity="0.5"/><rect x="15.3" y="134.38" width="4" height="1.3" fill="#001080" opacity="0.5"/><rect x="19.3" y="134.38" width="2" height="1.3" fill="#3b3b3b" opacity="0.2"/><rect x="8.3" y="136.41" width="6" height="1.3" fill="#af00db" opacity="0.5"/><rect x="14.3" y="136.41" width="1" height="1.3" fill="#3b3b3b" opacity="0.2"/><rect x="15.3" y="136.41" width="15" height="1.3" fill="#a31515" opacity="0.5"/><rect x="4.3" y="138.44" width="3" height="1.3" fill="#0000ff" opacity="0.5"/><rect x="7.3" y="138.44" width="1" height="1.3" fill="#3b3b3b" opacity="0.2"/><rect x="8.3" y="138.44" width="8" height="1.3" fill="#795e26" opacity="0.5"/><rect x="16.3" y="138.44" width="4" height="1.3" fill="#001080" opacity="0.5"/><rect x="20.3" y="138.44" width="2" height="1.3" fill="#3b3b3b" opacity="0.2"/><rect x="8.3" y="140.47" width="6" height="1.3" fill="#af00db" opacity="0.5"/><rect x="14.3" y="140.47" width="1" height="1.3" fill="#3b3b3b" opacity="0.2"/><rect x="15.3" y="140.47" width="15" height="1.3" fill="#a31515" opacity="0.5"/><rect x="0" y="146.46" width="94.5" height="2.2" fill="#5c9fe8"/><rect x="0.3" y="146.56" width="5" height="1.3" fill="#0000ff" opacity="0.5"/><rect x="5.3" y="146.56" width="1" height="1.3" fill="#3b3b3b" opacity="0.2"/><rect x="6.3" y="146.56" width="16" height="1.3" fill="#267f99" opacity="0.5"/><rect x="22.3" y="146.56" width="1" height="1.3" fill="#3b3b3b" opacity="0.2"/><rect x="23.3" y="146.56" width="5" height="1.3" fill="#0070c1" opacity="0.5"/><rect x="28.3" y="146.56" width="2" height="1.3" fill="#3b3b3b" opacity="0.2"/><rect x="4.3" y="148.59" width="3" height="1.3" fill="#a31515" opacity="0.5"/><rect x="0" y="150.52" width="94.5" height="2.2" fill="#5c9fe8"/><rect x="0.3" y="150.62" width="2" height="1.3" fill="#3b3b3b" opacity="0.2"/><rect x="2.3" y="150.62" width="8" height="1.3" fill="#008000" opacity="0.5"/><rect x="10.3" y="150.62" width="3" height="1.3" fill="#3b3b3b" opacity="0.2"/><rect x="13.3" y="150.62" width="20" height="1.3" fill="#267f99" opacity="0.5"/><rect x="33.3" y="150.62" width="1" height="1.3" fill="#3b3b3b" opacity="0.2"/><rect x="34.3" y="150.62" width="5" height="1.3" fill="#0070c1" opacity="0.5"/><rect x="39.3" y="150.62" width="2" height="1.3" fill="#3b3b3b" opacity="0.2"/><rect x="4.3" y="152.65" width="3" height="1.3" fill="#a31515" opacity="0.5"/><rect x="4.3" y="156.71" width="3" height="1.3" fill="#0000ff" opacity="0.5"/><rect x="7.3" y="156.71" width="1" height="1.3" fill="#3b3b3b" opacity="0.2"/><rect x="8.3" y="156.71" width="8" height="1.3" fill="#795e26" opacity="0.5"/><rect x="16.3" y="156.71" width="4" height="1.3" fill="#001080" opacity="0.5"/><rect x="20.3" y="156.71" width="2" height="1.3" fill="#3b3b3b" opacity="0.2"/><rect x="22.3" y="156.71" width="4" height="1.3" fill="#001080" opacity="0.5"/><rect x="26.3" y="156.71" width="2" height="1.3" fill="#3b3b3b" opacity="0.2"/><rect x="28.3" y="156.71" width="2" height="1.3" fill="#001080" opacity="0.5"/><rect x="30.3" y="156.71" width="2" height="1.3" fill="#3b3b3b" opacity="0.2"/><rect x="8.3" y="158.74" width="4" height="1.3" fill="#001080" opacity="0.5"/><rect x="12.3" y="158.74" width="1" height="1.3" fill="#3b3b3b" opacity="0.2"/><rect x="13.3" y="158.74" width="5" height="1.3" fill="#001080" opacity="0.5"/><rect x="18.3" y="158.74" width="3" height="1.3" fill="#3b3b3b" opacity="0.2"/><rect x="21.3" y="158.74" width="4" height="1.3" fill="#001080" opacity="0.5"/><rect x="8.3" y="160.77" width="4" height="1.3" fill="#001080" opacity="0.5"/><rect x="12.3" y="160.77" width="1" height="1.3" fill="#3b3b3b" opacity="0.2"/><rect x="13.3" y="160.77" width="3" height="1.3" fill="#001080" opacity="0.5"/><rect x="16.3" y="160.77" width="3" height="1.3" fill="#3b3b3b" opacity="0.2"/><rect x="19.3" y="160.77" width="2" height="1.3" fill="#001080" opacity="0.5"/><rect x="8.3" y="162.80" width="4" height="1.3" fill="#001080" opacity="0.5"/><rect x="12.3" y="162.80" width="1" height="1.3" fill="#3b3b3b" opacity="0.2"/><rect x="13.3" y="162.80" width="1" height="1.3" fill="#001080" opacity="0.5"/><rect x="14.3" y="162.80" width="3" height="1.3" fill="#3b3b3b" opacity="0.2"/><rect x="17.3" y="162.80" width="1" height="1.3" fill="#001080" opacity="0.5"/><rect x="8.3" y="164.83" width="4" height="1.3" fill="#001080" opacity="0.5"/><rect x="12.3" y="164.83" width="1" height="1.3" fill="#3b3b3b" opacity="0.2"/><rect x="13.3" y="164.83" width="16" height="1.3" fill="#001080" opacity="0.5"/><rect x="29.3" y="164.83" width="3" height="1.3" fill="#3b3b3b" opacity="0.2"/><rect x="32.3" y="164.83" width="1" height="1.3" fill="#3b3b3b" opacity="0.2"/><rect x="33.3" y="164.83" width="1" height="1.3" fill="#098658" opacity="0.5"/><rect x="34.3" y="164.83" width="1" height="1.3" fill="#3b3b3b" opacity="0.2"/><rect x="35.3" y="164.83" width="2" height="1.3" fill="#3b3b3b" opacity="0.2"/><rect x="37.3" y="164.83" width="3" height="1.3" fill="#267f99" opacity="0.5"/><rect x="40.3" y="164.83" width="20" height="1.3" fill="#001080" opacity="0.5"/><rect x="60.3" y="164.83" width="2" height="1.3" fill="#3b3b3b" opacity="0.2"/><rect x="62.3" y="164.83" width="1" height="1.3" fill="#3b3b3b" opacity="0.2"/><rect x="63.3" y="164.83" width="13" height="1.3" fill="#267f99" opacity="0.5"/><rect x="76.3" y="164.83" width="3" height="1.3" fill="#3b3b3b" opacity="0.2"/><rect x="8.3" y="166.86" width="4" height="1.3" fill="#001080" opacity="0.5"/><rect x="12.3" y="166.86" width="1" height="1.3" fill="#3b3b3b" opacity="0.2"/><rect x="13.3" y="166.86" width="9" height="1.3" fill="#001080" opacity="0.5"/><rect x="22.3" y="166.86" width="3" height="1.3" fill="#3b3b3b" opacity="0.2"/><rect x="25.3" y="166.86" width="13" height="1.3" fill="#267f99" opacity="0.5"/><rect x="38.3" y="166.86" width="2" height="1.3" fill="#3b3b3b" opacity="0.2"/><rect x="8.3" y="168.89" width="4" height="1.3" fill="#001080" opacity="0.5"/><rect x="12.3" y="168.89" width="1" height="1.3" fill="#3b3b3b" opacity="0.2"/><rect x="13.3" y="168.89" width="12" height="1.3" fill="#001080" opacity="0.5"/><rect x="25.3" y="168.89" width="3" height="1.3" fill="#3b3b3b" opacity="0.2"/><rect x="28.3" y="168.89" width="13" height="1.3" fill="#267f99" opacity="0.5"/><rect x="41.3" y="168.89" width="2" height="1.3" fill="#3b3b3b" opacity="0.2"/><rect x="4.3" y="172.95" width="3" height="1.3" fill="#0000ff" opacity="0.5"/><rect x="7.3" y="172.95" width="1" height="1.3" fill="#3b3b3b" opacity="0.2"/><rect x="8.3" y="172.95" width="14" height="1.3" fill="#795e26" opacity="0.5"/><rect x="22.3" y="172.95" width="4" height="1.3" fill="#001080" opacity="0.5"/><rect x="26.3" y="172.95" width="2" height="1.3" fill="#3b3b3b" opacity="0.2"/><rect x="28.3" y="172.95" width="4" height="1.3" fill="#001080" opacity="0.5"/><rect x="32.3" y="172.95" width="2" height="1.3" fill="#3b3b3b" opacity="0.2"/><rect x="8.3" y="174.98" width="4" height="1.3" fill="#af00db" opacity="0.5"/><rect x="12.3" y="177.01" width="21" height="1.3" fill="#795e26" opacity="0.5"/><rect x="33.3" y="177.01" width="4" height="1.3" fill="#001080" opacity="0.5"/><rect x="37.3" y="177.01" width="1" height="1.3" fill="#3b3b3b" opacity="0.2"/><rect x="38.3" y="177.01" width="4" height="1.3" fill="#001080" opacity="0.5"/><rect x="0" y="178.94" width="94.5" height="2.2" fill="#e2b447"/><rect x="8.3" y="179.04" width="6" height="1.3" fill="#af00db" opacity="0.5"/><rect x="14.3" y="179.04" width="1" height="1.3" fill="#3b3b3b" opacity="0.2"/><rect x="15.3" y="179.04" width="10" height="1.3" fill="#267f99" opacity="0.5"/><rect x="25.3" y="179.04" width="1" height="1.3" fill="#3b3b3b" opacity="0.2"/><rect x="26.3" y="179.04" width="2" height="1.3" fill="#af00db" opacity="0.5"/><rect x="28.3" y="179.04" width="1" height="1.3" fill="#3b3b3b" opacity="0.2"/><rect x="29.3" y="179.04" width="1" height="1.3" fill="#001080" opacity="0.5"/><rect x="30.3" y="179.04" width="1" height="1.3" fill="#3b3b3b" opacity="0.2"/><rect x="12.3" y="181.07" width="5" height="1.3" fill="#795e26" opacity="0.5"/><rect x="17.3" y="181.07" width="1" height="1.3" fill="#3b3b3b" opacity="0.2"/><rect x="16.3" y="183.10" width="48" height="1.3" fill="#a31515" opacity="0.5"/><rect x="64.3" y="183.10" width="4" height="1.3" fill="#001080" opacity="0.5"/><rect x="68.3" y="183.10" width="25" height="1.3" fill="#a31515" opacity="0.5"/><rect x="93.3" y="183.10" width="1" height="1.3" fill="#3b3b3b" opacity="0.2"/><rect x="12.3" y="185.13" width="1" height="1.3" fill="#3b3b3b" opacity="0.2"/><rect x="12.3" y="187.16" width="3" height="1.3" fill="#267f99" opacity="0.5"/><rect x="15.3" y="187.16" width="1" height="1.3" fill="#3b3b3b" opacity="0.2"/><rect x="16.3" y="187.16" width="4" height="1.3" fill="#795e26" opacity="0.5"/><rect x="20.3" y="187.16" width="1" height="1.3" fill="#3b3b3b" opacity="0.2"/><rect x="21.3" y="187.16" width="1" height="1.3" fill="#098658" opacity="0.5"/><rect x="22.3" y="187.16" width="2" height="1.3" fill="#3b3b3b" opacity="0.2"/><rect x="24.3" y="187.16" width="19" height="1.3" fill="#008000" opacity="0.5"/><rect x="8.3" y="189.19" width="6" height="1.3" fill="#af00db" opacity="0.5"/><rect x="14.3" y="189.19" width="1" height="1.3" fill="#3b3b3b" opacity="0.2"/><rect x="15.3" y="189.19" width="18" height="1.3" fill="#267f99" opacity="0.5"/><rect x="33.3" y="189.19" width="1" height="1.3" fill="#3b3b3b" opacity="0.2"/><rect x="12.3" y="191.22" width="4" height="1.3" fill="#001080" opacity="0.5"/><rect x="16.3" y="191.22" width="1" height="1.3" fill="#3b3b3b" opacity="0.2"/><rect x="17.3" y="191.22" width="1" height="1.3" fill="#3b3b3b" opacity="0.2"/><rect x="18.3" y="191.22" width="3" height="1.3" fill="#795e26" opacity="0.5"/><rect x="21.3" y="191.22" width="1" height="1.3" fill="#3b3b3b" opacity="0.2"/><rect x="22.3" y="191.22" width="4" height="1.3" fill="#001080" opacity="0.5"/><rect x="12.3" y="193.25" width="4" height="1.3" fill="#001080" opacity="0.5"/><rect x="16.3" y="193.25" width="1" height="1.3" fill="#3b3b3b" opacity="0.2"/><rect x="17.3" y="193.25" width="17" height="1.3" fill="#795e26" opacity="0.5"/><rect x="34.3" y="193.25" width="2" height="1.3" fill="#3b3b3b" opacity="0.2"/><rect x="36.3" y="193.25" width="4" height="1.3" fill="#001080" opacity="0.5"/><rect x="40.3" y="193.25" width="3" height="1.3" fill="#3b3b3b" opacity="0.2"/><rect x="43.3" y="193.25" width="8" height="1.3" fill="#008000" opacity="0.5"/><rect x="51.3" y="193.25" width="1" height="1.3" fill="#3b3b3b" opacity="0.2"/><rect x="52.3" y="193.25" width="6" height="1.3" fill="#008000" opacity="0.5"/><rect x="58.3" y="193.25" width="1" height="1.3" fill="#3b3b3b" opacity="0.2"/><rect x="59.3" y="193.25" width="6" height="1.3" fill="#008000" opacity="0.5"/><rect x="65.3" y="193.25" width="1" height="1.3" fill="#3b3b3b" opacity="0.2"/><rect x="66.3" y="193.25" width="6" height="1.3" fill="#008000" opacity="0.5"/><rect x="72.3" y="193.25" width="1" height="1.3" fill="#3b3b3b" opacity="0.2"/><rect x="73.3" y="193.25" width="6" height="1.3" fill="#008000" opacity="0.5"/><rect x="8.3" y="195.28" width="6" height="1.3" fill="#af00db" opacity="0.5"/><rect x="14.3" y="195.28" width="1" height="1.3" fill="#3b3b3b" opacity="0.2"/><rect x="15.3" y="195.28" width="18" height="1.3" fill="#267f99" opacity="0.5"/><rect x="33.3" y="195.28" width="1" height="1.3" fill="#3b3b3b" opacity="0.2"/><rect x="12.3" y="197.31" width="2" height="1.3" fill="#af00db" opacity="0.5"/><rect x="14.3" y="197.31" width="1" height="1.3" fill="#3b3b3b" opacity="0.2"/><rect x="15.3" y="197.31" width="4" height="1.3" fill="#001080" opacity="0.5"/><rect x="19.3" y="197.31" width="1" height="1.3" fill="#3b3b3b" opacity="0.2"/><rect x="20.3" y="197.31" width="13" height="1.3" fill="#0070c1" opacity="0.5"/><rect x="33.3" y="197.31" width="1" height="1.3" fill="#3b3b3b" opacity="0.2"/><rect x="16.3" y="199.34" width="4" height="1.3" fill="#001080" opacity="0.5"/><rect x="20.3" y="199.34" width="1" height="1.3" fill="#3b3b3b" opacity="0.2"/><rect x="21.3" y="199.34" width="13" height="1.3" fill="#0070c1" opacity="0.5"/><rect x="12.3" y="201.37" width="4" height="1.3" fill="#af00db" opacity="0.5"/><rect x="16.3" y="203.40" width="4" height="1.3" fill="#001080" opacity="0.5"/><rect x="20.3" y="203.40" width="1" height="1.3" fill="#3b3b3b" opacity="0.2"/><rect x="21.3" y="203.40" width="13" height="1.3" fill="#0070c1" opacity="0.5"/><rect x="12.3" y="205.43" width="4" height="1.3" fill="#001080" opacity="0.5"/><rect x="16.3" y="205.43" width="1" height="1.3" fill="#3b3b3b" opacity="0.2"/><rect x="17.3" y="205.43" width="17" height="1.3" fill="#795e26" opacity="0.5"/><rect x="34.3" y="205.43" width="2" height="1.3" fill="#3b3b3b" opacity="0.2"/><rect x="36.3" y="205.43" width="4" height="1.3" fill="#001080" opacity="0.5"/><rect x="40.3" y="205.43" width="3" height="1.3" fill="#3b3b3b" opacity="0.2"/><rect x="43.3" y="205.43" width="8" height="1.3" fill="#008000" opacity="0.5"/><rect x="51.3" y="205.43" width="1" height="1.3" fill="#3b3b3b" opacity="0.2"/><rect x="52.3" y="205.43" width="6" height="1.3" fill="#008000" opacity="0.5"/><rect x="58.3" y="205.43" width="1" height="1.3" fill="#3b3b3b" opacity="0.2"/><rect x="59.3" y="205.43" width="6" height="1.3" fill="#008000" opacity="0.5"/><rect x="65.3" y="205.43" width="1" height="1.3" fill="#3b3b3b" opacity="0.2"/><rect x="66.3" y="205.43" width="6" height="1.3" fill="#008000" opacity="0.5"/><rect x="72.3" y="205.43" width="1" height="1.3" fill="#3b3b3b" opacity="0.2"/><rect x="73.3" y="205.43" width="6" height="1.3" fill="#008000" opacity="0.5"/><rect x="8.3" y="207.46" width="4" height="1.3" fill="#af00db" opacity="0.5"/><rect x="12.3" y="209.49" width="4" height="1.3" fill="#001080" opacity="0.5"/><rect x="16.3" y="209.49" width="1" height="1.3" fill="#3b3b3b" opacity="0.2"/><rect x="17.3" y="209.49" width="9" height="1.3" fill="#001080" opacity="0.5"/><rect x="26.3" y="209.49" width="1" height="1.3" fill="#3b3b3b" opacity="0.2"/><rect x="27.3" y="209.49" width="4" height="1.3" fill="#001080" opacity="0.5"/><rect x="12.3" y="211.52" width="4" height="1.3" fill="#001080" opacity="0.5"/><rect x="16.3" y="211.52" width="1" height="1.3" fill="#3b3b3b" opacity="0.2"/><rect x="17.3" y="211.52" width="17" height="1.3" fill="#795e26" opacity="0.5"/><rect x="34.3" y="211.52" width="2" height="1.3" fill="#3b3b3b" opacity="0.2"/><rect x="4.3" y="215.58" width="3" height="1.3" fill="#0000ff" opacity="0.5"/><rect x="7.3" y="215.58" width="1" height="1.3" fill="#3b3b3b" opacity="0.2"/><rect x="8.3" y="215.58" width="19" height="1.3" fill="#795e26" opacity="0.5"/><rect x="27.3" y="215.58" width="4" height="1.3" fill="#001080" opacity="0.5"/><rect x="31.3" y="215.58" width="2" height="1.3" fill="#3b3b3b" opacity="0.2"/><rect x="33.3" y="215.58" width="17" height="1.3" fill="#001080" opacity="0.5"/><rect x="50.3" y="215.58" width="2" height="1.3" fill="#3b3b3b" opacity="0.2"/><rect x="52.3" y="215.58" width="4" height="1.3" fill="#001080" opacity="0.5"/><rect x="56.3" y="215.58" width="2" height="1.3" fill="#3b3b3b" opacity="0.2"/><rect x="8.3" y="217.61" width="4" height="1.3" fill="#af00db" opacity="0.5"/><rect x="12.3" y="219.64" width="27" height="1.3" fill="#795e26" opacity="0.5"/><rect x="39.3" y="219.64" width="4" height="1.3" fill="#001080" opacity="0.5"/><rect x="43.3" y="219.64" width="1" height="1.3" fill="#3b3b3b" opacity="0.2"/><rect x="44.3" y="219.64" width="4" height="1.3" fill="#001080" opacity="0.5"/><rect x="0" y="221.57" width="94.5" height="2.2" fill="#e2b447"/><rect x="8.3" y="221.67" width="6" height="1.3" fill="#af00db" opacity="0.5"/><rect x="14.3" y="221.67" width="1" height="1.3" fill="#3b3b3b" opacity="0.2"/><rect x="15.3" y="221.67" width="10" height="1.3" fill="#267f99" opacity="0.5"/><rect x="25.3" y="221.67" width="1" height="1.3" fill="#3b3b3b" opacity="0.2"/><rect x="26.3" y="221.67" width="2" height="1.3" fill="#af00db" opacity="0.5"/><rect x="28.3" y="221.67" width="1" height="1.3" fill="#3b3b3b" opacity="0.2"/><rect x="29.3" y="221.67" width="1" height="1.3" fill="#001080" opacity="0.5"/><rect x="30.3" y="221.67" width="1" height="1.3" fill="#3b3b3b" opacity="0.2"/><rect x="12.3" y="223.70" width="5" height="1.3" fill="#795e26" opacity="0.5"/><rect x="17.3" y="223.70" width="1" height="1.3" fill="#3b3b3b" opacity="0.2"/><rect x="16.3" y="225.73" width="48" height="1.3" fill="#a31515" opacity="0.5"/><rect x="64.3" y="225.73" width="4" height="1.3" fill="#001080" opacity="0.5"/><rect x="68.3" y="225.73" width="25" height="1.3" fill="#a31515" opacity="0.5"/><rect x="93.3" y="225.73" width="1" height="1.3" fill="#3b3b3b" opacity="0.2"/><rect x="12.3" y="227.76" width="1" height="1.3" fill="#3b3b3b" opacity="0.2"/><rect x="12.3" y="229.79" width="3" height="1.3" fill="#267f99" opacity="0.5"/><rect x="15.3" y="229.79" width="1" height="1.3" fill="#3b3b3b" opacity="0.2"/><rect x="16.3" y="229.79" width="4" height="1.3" fill="#795e26" opacity="0.5"/><rect x="20.3" y="229.79" width="1" height="1.3" fill="#3b3b3b" opacity="0.2"/><rect x="21.3" y="229.79" width="1" height="1.3" fill="#098658" opacity="0.5"/><rect x="22.3" y="229.79" width="2" height="1.3" fill="#3b3b3b" opacity="0.2"/><rect x="24.3" y="229.79" width="19" height="1.3" fill="#008000" opacity="0.5"/><rect x="8.3" y="231.82" width="6" height="1.3" fill="#af00db" opacity="0.5"/><rect x="14.3" y="231.82" width="1" height="1.3" fill="#3b3b3b" opacity="0.2"/><rect x="15.3" y="231.82" width="24" height="1.3" fill="#267f99" opacity="0.5"/><rect x="39.3" y="231.82" width="1" height="1.3" fill="#3b3b3b" opacity="0.2"/><rect x="12.3" y="233.85" width="4" height="1.3" fill="#001080" opacity="0.5"/><rect x="16.3" y="233.85" width="1" height="1.3" fill="#3b3b3b" opacity="0.2"/><rect x="17.3" y="233.85" width="1" height="1.3" fill="#3b3b3b" opacity="0.2"/><rect x="18.3" y="233.85" width="3" height="1.3" fill="#795e26" opacity="0.5"/><rect x="21.3" y="233.85" width="1" height="1.3" fill="#3b3b3b" opacity="0.2"/><rect x="22.3" y="233.85" width="4" height="1.3" fill="#001080" opacity="0.5"/><rect x="12.3" y="235.88" width="4" height="1.3" fill="#001080" opacity="0.5"/><rect x="16.3" y="235.88" width="1" height="1.3" fill="#3b3b3b" opacity="0.2"/><rect x="17.3" y="235.88" width="23" height="1.3" fill="#795e26" opacity="0.5"/><rect x="40.3" y="235.88" width="1" height="1.3" fill="#3b3b3b" opacity="0.2"/><rect x="16.3" y="237.91" width="17" height="1.3" fill="#001080" opacity="0.5"/><rect x="33.3" y="237.91" width="2" height="1.3" fill="#3b3b3b" opacity="0.2"/><rect x="35.3" y="237.91" width="4" height="1.3" fill="#001080" opacity="0.5"/><rect x="12.3" y="239.94" width="1" height="1.3" fill="#3b3b3b" opacity="0.2"/><rect x="13.3" y="239.94" width="25" height="1.3" fill="#008000" opacity="0.5"/><rect x="8.3" y="241.97" width="6" height="1.3" fill="#af00db" opacity="0.5"/><rect x="14.3" y="241.97" width="1" height="1.3" fill="#3b3b3b" opacity="0.2"/><rect x="15.3" y="241.97" width="24" height="1.3" fill="#267f99" opacity="0.5"/><rect x="39.3" y="241.97" width="1" height="1.3" fill="#3b3b3b" opacity="0.2"/><rect x="12.3" y="244.00" width="2" height="1.3" fill="#af00db" opacity="0.5"/><rect x="14.3" y="244.00" width="1" height="1.3" fill="#3b3b3b" opacity="0.2"/><rect x="15.3" y="244.00" width="4" height="1.3" fill="#001080" opacity="0.5"/><rect x="19.3" y="244.00" width="1" height="1.3" fill="#3b3b3b" opacity="0.2"/><rect x="20.3" y="244.00" width="19" height="1.3" fill="#0070c1" opacity="0.5"/><rect x="39.3" y="244.00" width="1" height="1.3" fill="#3b3b3b" opacity="0.2"/><rect x="16.3" y="246.03" width="4" height="1.3" fill="#001080" opacity="0.5"/><rect x="20.3" y="246.03" width="1" height="1.3" fill="#3b3b3b" opacity="0.2"/><rect x="21.3" y="246.03" width="19" height="1.3" fill="#0070c1" opacity="0.5"/><rect x="12.3" y="248.06" width="4" height="1.3" fill="#af00db" opacity="0.5"/><rect x="16.3" y="250.09" width="4" height="1.3" fill="#001080" opacity="0.5"/><rect x="20.3" y="250.09" width="1" height="1.3" fill="#3b3b3b" opacity="0.2"/><rect x="21.3" y="250.09" width="19" height="1.3" fill="#0070c1" opacity="0.5"/><rect x="12.3" y="252.12" width="4" height="1.3" fill="#001080" opacity="0.5"/><rect x="16.3" y="252.12" width="1" height="1.3" fill="#3b3b3b" opacity="0.2"/><rect x="17.3" y="252.12" width="23" height="1.3" fill="#795e26" opacity="0.5"/><rect x="40.3" y="252.12" width="1" height="1.3" fill="#3b3b3b" opacity="0.2"/><rect x="16.3" y="254.15" width="17" height="1.3" fill="#001080" opacity="0.5"/><rect x="33.3" y="254.15" width="2" height="1.3" fill="#3b3b3b" opacity="0.2"/><rect x="35.3" y="254.15" width="4" height="1.3" fill="#001080" opacity="0.5"/><rect x="12.3" y="256.18" width="1" height="1.3" fill="#3b3b3b" opacity="0.2"/><rect x="13.3" y="256.18" width="25" height="1.3" fill="#008000" opacity="0.5"/><rect x="8.3" y="258.21" width="4" height="1.3" fill="#af00db" opacity="0.5"/><rect x="12.3" y="260.24" width="5" height="1.3" fill="#001080" opacity="0.5"/><rect x="17.3" y="260.24" width="3" height="1.3" fill="#3b3b3b" opacity="0.2"/><rect x="20.3" y="260.24" width="3" height="1.3" fill="#267f99" opacity="0.5"/><rect x="23.3" y="260.24" width="1" height="1.3" fill="#3b3b3b" opacity="0.2"/><rect x="24.3" y="260.24" width="17" height="1.3" fill="#001080" opacity="0.5"/><rect x="41.3" y="260.24" width="1" height="1.3" fill="#3b3b3b" opacity="0.2"/><rect x="42.3" y="260.24" width="6" height="1.3" fill="#795e26" opacity="0.5"/><rect x="48.3" y="260.24" width="1" height="1.3" fill="#3b3b3b" opacity="0.2"/><rect x="49.3" y="260.24" width="3" height="1.3" fill="#a31515" opacity="0.5"/><rect x="52.3" y="260.24" width="3" height="1.3" fill="#3b3b3b" opacity="0.2"/><rect x="55.3" y="260.24" width="1" height="1.3" fill="#098658" opacity="0.5"/><rect x="12.3" y="262.27" width="2" height="1.3" fill="#a31515" opacity="0.5"/><rect x="12.3" y="264.30" width="1" height="1.3" fill="#3b3b3b" opacity="0.2"/><rect x="13.3" y="264.30" width="24" height="1.3" fill="#008000" opacity="0.5"/><rect x="12.3" y="266.33" width="4" height="1.3" fill="#001080" opacity="0.5"/><rect x="16.3" y="266.33" width="1" height="1.3" fill="#3b3b3b" opacity="0.2"/><rect x="17.3" y="266.33" width="16" height="1.3" fill="#001080" opacity="0.5"/><rect x="33.3" y="266.33" width="1" height="1.3" fill="#3b3b3b" opacity="0.2"/><rect x="34.3" y="266.33" width="5" height="1.3" fill="#001080" opacity="0.5"/><rect x="39.3" y="266.33" width="4" height="1.3" fill="#3b3b3b" opacity="0.2"/><rect x="43.3" y="266.33" width="4" height="1.3" fill="#001080" opacity="0.5"/><rect x="12.3" y="268.36" width="4" height="1.3" fill="#001080" opacity="0.5"/><rect x="16.3" y="268.36" width="1" height="1.3" fill="#3b3b3b" opacity="0.2"/><rect x="17.3" y="268.36" width="17" height="1.3" fill="#795e26" opacity="0.5"/><rect x="34.3" y="268.36" width="2" height="1.3" fill="#3b3b3b" opacity="0.2"/><rect x="4.3" y="272.42" width="3" height="1.3" fill="#0000ff" opacity="0.5"/><rect x="7.3" y="272.42" width="1" height="1.3" fill="#3b3b3b" opacity="0.2"/><rect x="8.3" y="272.42" width="17" height="1.3" fill="#795e26" opacity="0.5"/><rect x="25.3" y="272.42" width="4" height="1.3" fill="#001080" opacity="0.5"/><rect x="29.3" y="272.42" width="2" height="1.3" fill="#3b3b3b" opacity="0.2"/><rect x="8.3" y="274.45" width="17" height="1.3" fill="#001080" opacity="0.5"/><rect x="25.3" y="274.45" width="3" height="1.3" fill="#3b3b3b" opacity="0.2"/><rect x="28.3" y="274.45" width="3" height="1.3" fill="#098658" opacity="0.5"/><rect x="8.3" y="276.48" width="11" height="1.3" fill="#001080" opacity="0.5"/><rect x="19.3" y="276.48" width="3" height="1.3" fill="#3b3b3b" opacity="0.2"/><rect x="22.3" y="276.48" width="3" height="1.3" fill="#098658" opacity="0.5"/><rect x="8.3" y="280.54" width="33" height="1.3" fill="#008000" opacity="0.5"/><rect x="8.3" y="282.57" width="13" height="1.3" fill="#001080" opacity="0.5"/><rect x="21.3" y="282.57" width="3" height="1.3" fill="#3b3b3b" opacity="0.2"/><rect x="24.3" y="282.57" width="4" height="1.3" fill="#001080" opacity="0.5"/><rect x="28.3" y="282.57" width="1" height="1.3" fill="#3b3b3b" opacity="0.2"/><rect x="29.3" y="282.57" width="9" height="1.3" fill="#001080" opacity="0.5"/><rect x="8.3" y="284.60" width="2" height="1.3" fill="#af00db" opacity="0.5"/><rect x="10.3" y="284.60" width="1" height="1.3" fill="#3b3b3b" opacity="0.2"/><rect x="11.3" y="284.60" width="10" height="1.3" fill="#795e26" opacity="0.5"/><rect x="21.3" y="284.60" width="13" height="1.3" fill="#001080" opacity="0.5"/><rect x="34.3" y="284.60" width="2" height="1.3" fill="#3b3b3b" opacity="0.2"/><rect x="36.3" y="284.60" width="12" height="1.3" fill="#267f99" opacity="0.5"/><rect x="48.3" y="284.60" width="2" height="1.3" fill="#3b3b3b" opacity="0.2"/><rect x="12.3" y="286.63" width="13" height="1.3" fill="#001080" opacity="0.5"/><rect x="25.3" y="286.63" width="3" height="1.3" fill="#3b3b3b" opacity="0.2"/><rect x="28.3" y="286.63" width="1" height="1.3" fill="#098658" opacity="0.5"/><rect x="8.3" y="288.66" width="42" height="1.3" fill="#008000" opacity="0.5"/><rect x="8.3" y="290.69" width="19" height="1.3" fill="#001080" opacity="0.5"/><rect x="27.3" y="290.69" width="3" height="1.3" fill="#3b3b3b" opacity="0.2"/><rect x="30.3" y="290.69" width="1" height="1.3" fill="#098658" opacity="0.5"/><rect x="8.3" y="292.72" width="3" height="1.3" fill="#af00db" opacity="0.5"/><rect x="11.3" y="292.72" width="1" height="1.3" fill="#3b3b3b" opacity="0.2"/><rect x="12.3" y="292.72" width="15" height="1.3" fill="#001080" opacity="0.5"/><rect x="27.3" y="292.72" width="1" height="1.3" fill="#3b3b3b" opacity="0.2"/><rect x="28.3" y="292.72" width="2" height="1.3" fill="#af00db" opacity="0.5"/><rect x="30.3" y="292.72" width="1" height="1.3" fill="#3b3b3b" opacity="0.2"/><rect x="31.3" y="292.72" width="4" height="1.3" fill="#001080" opacity="0.5"/><rect x="35.3" y="292.72" width="1" height="1.3" fill="#3b3b3b" opacity="0.2"/><rect x="36.3" y="292.72" width="16" height="1.3" fill="#001080" opacity="0.5"/><rect x="52.3" y="292.72" width="1" height="1.3" fill="#3b3b3b" opacity="0.2"/><rect x="12.3" y="294.75" width="2" height="1.3" fill="#af00db" opacity="0.5"/><rect x="14.3" y="294.75" width="1" height="1.3" fill="#3b3b3b" opacity="0.2"/><rect x="15.3" y="294.75" width="10" height="1.3" fill="#795e26" opacity="0.5"/><rect x="25.3" y="294.75" width="15" height="1.3" fill="#001080" opacity="0.5"/><rect x="40.3" y="294.75" width="2" height="1.3" fill="#3b3b3b" opacity="0.2"/><rect x="42.3" y="294.75" width="12" height="1.3" fill="#267f99" opacity="0.5"/><rect x="54.3" y="294.75" width="2" height="1.3" fill="#3b3b3b" opacity="0.2"/><rect x="16.3" y="296.78" width="19" height="1.3" fill="#001080" opacity="0.5"/><rect x="35.3" y="296.78" width="4" height="1.3" fill="#3b3b3b" opacity="0.2"/><rect x="39.3" y="296.78" width="1" height="1.3" fill="#098658" opacity="0.5"/><rect x="12.3" y="298.81" width="4" height="1.3" fill="#af00db" opacity="0.5"/><rect x="16.3" y="300.84" width="19" height="1.3" fill="#001080" opacity="0.5"/><rect x="35.3" y="300.84" width="4" height="1.3" fill="#3b3b3b" opacity="0.2"/><rect x="39.3" y="300.84" width="15" height="1.3" fill="#001080" opacity="0.5"/><rect x="8.3" y="304.90" width="24" height="1.3" fill="#008000" opacity="0.5"/><rect x="8.3" y="306.93" width="4" height="1.3" fill="#001080" opacity="0.5"/><rect x="12.3" y="306.93" width="1" height="1.3" fill="#3b3b3b" opacity="0.2"/><rect x="13.3" y="306.93" width="12" height="1.3" fill="#001080" opacity="0.5"/><rect x="25.3" y="306.93" width="3" height="1.3" fill="#3b3b3b" opacity="0.2"/><rect x="28.3" y="306.93" width="1" height="1.3" fill="#3b3b3b" opacity="0.2"/><rect x="12.3" y="308.96" width="17" height="1.3" fill="#001080" opacity="0.5"/><rect x="29.3" y="308.96" width="3" height="1.3" fill="#3b3b3b" opacity="0.2"/><rect x="32.3" y="308.96" width="19" height="1.3" fill="#001080" opacity="0.5"/><rect x="51.3" y="308.96" width="3" height="1.3" fill="#3b3b3b" opacity="0.2"/><rect x="54.3" y="308.96" width="11" height="1.3" fill="#001080" opacity="0.5"/><rect x="65.3" y="308.96" width="3" height="1.3" fill="#3b3b3b" opacity="0.2"/><rect x="68.3" y="308.96" width="13" height="1.3" fill="#001080" opacity="0.5"/><rect x="8.3" y="310.99" width="1" height="1.3" fill="#3b3b3b" opacity="0.2"/><rect x="8.3" y="315.05" width="6" height="1.3" fill="#af00db" opacity="0.5"/><rect x="14.3" y="315.05" width="1" height="1.3" fill="#3b3b3b" opacity="0.2"/><rect x="15.3" y="315.05" width="4" height="1.3" fill="#001080" opacity="0.5"/><rect x="19.3" y="315.05" width="1" height="1.3" fill="#3b3b3b" opacity="0.2"/><rect x="20.3" y="315.05" width="12" height="1.3" fill="#001080" opacity="0.5"/></svg>
<div style="position:absolute;left:1763px;top:104px;width:1px;height:760px;background:#f0f0f0;"></div>
<div style="position:absolute;left:1777px;top:141px;width:4px;height:4.7px;background:#d9a21b;"></div>
<div style="position:absolute;left:1764px;top:146.3px;width:17px;height:2.7px;background:#3b3b3b;"></div>
<div style="position:absolute;left:1777px;top:431px;width:4px;height:15.6px;background:#1a73e8;"></div>
<div style="position:absolute;left:1777px;top:493px;width:4px;height:8px;background:#d9a21b;"></div>
<div style="position:absolute;left:1777px;top:574px;width:4px;height:8px;background:#d9a21b;"></div>
<div id="t106" style="position:absolute;left:545.8px;top:883.45px;font-family:'Liberation Sans', sans-serif;font-size:16.3px;line-height:16.3px;color:#616161;font-weight:normal;white-space:pre;transform:scaleX(0.8631);transform-origin:left top;">PROBLEMS</div>
<div style="position:absolute;left:631px;top:878px;width:30.6px;height:23.6px;border-radius:11.8px;background:#005fb8"></div>
<div id="t107" style="position:absolute;left:638.55px;top:882.83px;font-family:'Liberation Sans', sans-serif;font-size:15.5px;line-height:15.5px;color:#ffffff;font-weight:normal;white-space:pre;transform:scaleX(0.8986);transform-origin:left top;">18</div>
<div id="t108" style="position:absolute;left:694.6px;top:883.45px;font-family:'Liberation Sans', sans-serif;font-size:16.3px;line-height:16.3px;color:#616161;font-weight:normal;white-space:pre;transform:scaleX(0.8844);transform-origin:left top;">OUTPUT</div>
<div id="t109" style="position:absolute;left:790.9px;top:883.45px;font-family:'Liberation Sans', sans-serif;font-size:16.3px;line-height:16.3px;color:#616161;font-weight:normal;white-space:pre;transform:scaleX(0.8849);transform-origin:left top;">DEBUG CONSOLE</div>
<div id="t110" style="position:absolute;left:952.9px;top:883.45px;font-family:'Liberation Sans', sans-serif;font-size:16.3px;line-height:16.3px;color:#3b3b3b;font-weight:normal;white-space:pre;transform:scaleX(0.9122);transform-origin:left top;">TERMINAL</div>
<div style="position:absolute;left:950px;top:905.7px;width:81.5px;height:2px;background:#005fb8;"></div>
<div id="t111" style="position:absolute;left:1065px;top:883.45px;font-family:'Liberation Sans', sans-serif;font-size:16.3px;line-height:16.3px;color:#616161;font-weight:normal;white-space:pre;transform:scaleX(0.8173);transform-origin:left top;">PORTS</div>
<div style="position:absolute;left:1117.7px;top:878px;width:23.4px;height:23.4px;border-radius:11.7px;background:#005fb8"></div>
<div id="t112" style="position:absolute;left:1125.15px;top:882.73px;font-family:'Liberation Sans', sans-serif;font-size:15.5px;line-height:15.5px;color:#ffffff;font-weight:normal;white-space:pre;transform:scaleX(0.9855);transform-origin:left top;">2</div>
<div id="t113" style="position:absolute;left:1173px;top:883.45px;font-family:'Liberation Sans', sans-serif;font-size:16.3px;line-height:16.3px;color:#616161;font-weight:normal;white-space:pre;transform:scaleX(0.8456);transform-origin:left top;">SPELL CHECKER</div>
<div style="position:absolute;left:1292.6px;top:878px;width:30.3px;height:23.6px;border-radius:11.8px;background:#005fb8"></div>
<div id="t114" style="position:absolute;left:1300.0px;top:882.83px;font-family:'Liberation Sans', sans-serif;font-size:15.5px;line-height:15.5px;color:#ffffff;font-weight:normal;white-space:pre;transform:scaleX(0.8986);transform-origin:left top;">10</div>
<svg style="position:absolute;left:1583px;top:879px;" width="24" height="24" viewBox="0 0 24 24" fill="none"><rect x="1.5" y="1.5" width="20.5" height="20.5" rx="3" stroke="#3b3b3b" stroke-width="1.7"/><path d="M11.75 1.5 V22" stroke="#3b3b3b" stroke-width="1.7"/></svg>
<svg style="position:absolute;left:1611.5px;top:886px;" width="14" height="10" viewBox="0 0 14 10" fill="none"><path d="M1.5 2 L7 7.5 L12.5 2" stroke="#3b3b3b" stroke-width="1.5" stroke-linecap="round" stroke-linejoin="round"/></svg>
<div style="position:absolute;left:1644.9px;top:889.2px;width:3.2px;height:3.2px;background:#2b2b2b;border-radius:50%"></div>
<div style="position:absolute;left:1651.0px;top:889.2px;width:3.2px;height:3.2px;background:#2b2b2b;border-radius:50%"></div>
<div style="position:absolute;left:1657.1000000000001px;top:889.2px;width:3.2px;height:3.2px;background:#2b2b2b;border-radius:50%"></div>
<div style="position:absolute;left:1682px;top:880px;width:1px;height:22.5px;background:#d0d0d0;"></div>
<svg style="position:absolute;left:1699.5px;top:880px;" width="22" height="20" viewBox="0 0 22 20" fill="none"><path d="M1.5 7 V3 Q1.5 1.5 3 1.5 H7 M14 1.5 H18 Q19.5 1.5 19.5 3 V7 M19.5 12 V16 Q19.5 17.5 18 17.5 H14 M7 17.5 H3 Q1.5 17.5 1.5 16 V12" stroke="#3b3b3b" stroke-width="1.7" stroke-linecap="round"/></svg>
<svg style="position:absolute;left:1741px;top:882.5px;" width="16" height="16" viewBox="0 0 16 16" fill="none"><path d="M1.2 1.2 L14.8 14.8 M14.8 1.2 L1.2 14.8" stroke="#3b3b3b" stroke-width="1.6" stroke-linecap="round"/></svg>
<div style="position:absolute;left:515px;top:915px;width:1060px;height:179px;overflow:hidden">
<div id="t115" style="position:absolute;left:30.200000000000045px;top:30.84px;font-family:'Liberation Mono', monospace;font-size:18.1px;line-height:18.1px;color:#3b3b3b;font-weight:normal;white-space:pre;">Overall mark: 6.0</div>
<div id="t116" style="position:absolute;left:30.200000000000045px;top:81.04px;font-family:'Liberation Mono', monospace;font-size:18.1px;line-height:18.1px;color:#3b3b3b;font-weight:normal;white-space:pre;">(lab-h) <b style="color:#0a8a0a">vscode@b1493f6aa32f</b>:<b style="color:#0451a5">/workspaces/labs-ALEX-CASSON-LAB/lab-h</b>$ /workspaces/labs-ALEX-CASS</div>
<div id="t117" style="position:absolute;left:30.200000000000045px;top:107.04px;font-family:'Liberation Mono', monospace;font-size:18.1px;line-height:18.1px;color:#3b3b3b;font-weight:normal;white-space:pre;">ON-LAB/lab-h/.venv/bin/python /workspaces/labs-ALEX-CASSON-LAB/lab-h/src/student_example.py</div>
<div id="t118" style="position:absolute;left:30.200000000000045px;top:133.14px;font-family:'Liberation Mono', monospace;font-size:18.1px;line-height:18.1px;color:#3b3b3b;font-weight:normal;white-space:pre;">Error setting exam mark. Asked for value: apple. It should be a number.</div>
<div id="t119" style="position:absolute;left:30.200000000000045px;top:159.04px;font-family:'Liberation Mono', monospace;font-size:18.1px;line-height:18.1px;color:#3b3b3b;font-weight:normal;white-space:pre;">(lab-h) <b style="color:#0a8a0a">vscode@b1493f6aa32f</b>:<b style="color:#0451a5">/workspaces/labs-ALEX-CASSON-LAB/lab-h</b>$ </div>
</div>
<div style="position:absolute;left:1283px;top:1069px;width:11px;height:23px;box-sizing:border-box;border:1.5px solid #0451a5"></div>
<div style="position:absolute;left:1575px;top:939px;width:1px;height:155px;background:#e5e5e5;"></div>
<div style="position:absolute;left:1575px;top:939px;width:22px;height:1px;background:#e5e5e5;"></div>
<div style="position:absolute;left:1596px;top:915px;width:1px;height:179px;background:#e5e5e5;"></div>
<div style="position:absolute;left:1597px;top:981.2px;width:184px;height:32px;background:#e4e6f1;"></div>
<div style="position:absolute;left:1596px;top:981.2px;width:2.5px;height:32px;background:#005fb8;"></div>
<svg style="position:absolute;left:1612px;top:920.5px;" width="22" height="23" viewBox="0 0 22 23" fill="none"><path d="M10.5 1.5 L19.5 6 V16.5 L10.5 21.5 L1.5 16.5 V6 Z" stroke="#3b3b3b" stroke-width="1.3" stroke-linejoin="round" fill="#ffffff"/><path d="M11.5 10.5 L19.5 6 V16.5 L11.5 21 Z" fill="#3b3b3b"/><path d="M13.5 16 H16.5" stroke="#fff" stroke-width="1"/></svg>
<div id="t120" style="position:absolute;left:1641px;top:924.68px;font-family:'Liberation Sans', sans-serif;font-size:19.2px;line-height:19.2px;color:#895503;font-weight:normal;white-space:pre;transform:scaleX(0.9373);transform-origin:left top;">bash</div>
<div id="t121" style="position:absolute;left:1689px;top:926.38px;font-family:'Liberation Sans', sans-serif;font-size:17.2px;line-height:17.2px;color:#895503;font-weight:normal;white-space:pre;transform:scaleX(1.0388);transform-origin:left top;opacity:0.85;">lab-h</div>
<svg style="position:absolute;left:1745px;top:920px;" width="23" height="21" viewBox="0 0 23 21" fill="none"><path d="M11.5 1.5 L21.5 19.5 H1.5 Z" stroke="#895503" stroke-width="1.6" stroke-linejoin="round"/><path d="M11.5 7.5 V13.5" stroke="#895503" stroke-width="1.7"/><circle cx="11.5" cy="16.3" r="1.05" fill="#895503"/></svg>
<svg style="position:absolute;left:1612px;top:953.5px;" width="22" height="23" viewBox="0 0 22 23" fill="none"><path d="M10.5 1.5 L19.5 6 V16.5 L10.5 21.5 L1.5 16.5 V6 Z" stroke="#3b3b3b" stroke-width="1.3" stroke-linejoin="round" fill="#ffffff"/><path d="M11.5 10.5 L19.5 6 V16.5 L11.5 21 Z" fill="#3b3b3b"/><path d="M13.5 16 H16.5" stroke="#fff" stroke-width="1"/></svg>
<div id="t122" style="position:absolute;left:1641px;top:956.58px;font-family:'Liberation Sans', sans-serif;font-size:19.2px;line-height:19.2px;color:#895503;font-weight:normal;white-space:pre;transform:scaleX(0.9808);transform-origin:left top;">Python</div>
<div id="t123" style="position:absolute;left:1708.5px;top:958.28px;font-family:'Liberation Sans', sans-serif;font-size:17.2px;line-height:17.2px;color:#895503;font-weight:normal;white-space:pre;transform:scaleX(0.9566);transform-origin:left top;opacity:0.85;">la...</div>
<svg style="position:absolute;left:1745px;top:953px;" width="23" height="21" viewBox="0 0 23 21" fill="none"><path d="M11.5 1.5 L21.5 19.5 H1.5 Z" stroke="#895503" stroke-width="1.6" stroke-linejoin="round"/><path d="M11.5 7.5 V13.5" stroke="#895503" stroke-width="1.7"/><circle cx="11.5" cy="16.3" r="1.05" fill="#895503"/></svg>
<svg style="position:absolute;left:1612px;top:986.5px;" width="22" height="23" viewBox="0 0 22 23" fill="none"><path d="M10.5 1.5 L19.5 6 V16.5 L10.5 21.5 L1.5 16.5 V6 Z" stroke="#3b3b3b" stroke-width="1.3" stroke-linejoin="round" fill="#ffffff"/><path d="M11.5 10.5 L19.5 6 V16.5 L11.5 21 Z" fill="#3b3b3b"/><path d="M13.5 16 H16.5" stroke="#fff" stroke-width="1"/></svg>
<div id="t124" style="position:absolute;left:1641px;top:988.58px;font-family:'Liberation Sans', sans-serif;font-size:19.2px;line-height:19.2px;color:#3b3b3b;font-weight:normal;white-space:pre;transform:scaleX(0.9808);transform-origin:left top;">Python</div>
<div id="t125" style="position:absolute;left:1708.5px;top:990.28px;font-family:'Liberation Sans', sans-serif;font-size:17.2px;line-height:17.2px;color:#6f6f6f;font-weight:normal;white-space:pre;transform:scaleX(1.0492);transform-origin:left top;">lab-h</div>
<div style="position:absolute;left:1px;top:1095px;width:405.5px;height:29px;background:#005fb8;border-bottom-left-radius:8px"></div>
<svg style="position:absolute;left:13px;top:1098px;" width="22" height="24" viewBox="0 0 22 24" fill="none"><path d="M3.5 8.8 L10.2 14.9 L3.5 21.3 M17.6 2.8 L11.2 9.2 L17.6 15.2" stroke="#ffffff" stroke-width="1.7" stroke-linecap="round" stroke-linejoin="round"/></svg>
<div id="t126" style="position:absolute;left:40.9px;top:1101.33px;font-family:'Liberation Sans', sans-serif;font-size:18.2px;line-height:18.2px;color:#ffffff;font-weight:normal;white-space:pre;transform:scaleX(0.9353);transform-origin:left top;">Dev Container: EEEN11202 devcontainer @ ...</div>
<svg style="position:absolute;left:419px;top:1097px;" width="26" height="27" viewBox="0 0 26 27" fill="none"><circle cx="5" cy="4.5" r="3" stroke="#3b3b3b" stroke-width="1.5"/><circle cx="5" cy="21.5" r="3" stroke="#3b3b3b" stroke-width="1.5"/>
<path d="M5 7.5 V18.5 M5 16 Q5 12.5 9 12.5 H10" stroke="#3b3b3b" stroke-width="1.5"/>
<path d="M12 9.5 Q12 6.2 15.2 6.2 Q18.4 6.2 18.4 9.5" stroke="#3b3b3b" stroke-width="1.5"/>
<circle cx="16.5" cy="18.5" r="6.8" fill="#3b3b3b"/>
<path d="M16.5 14.3 V22.7 M12.9 16.4 L20.1 20.6 M20.1 16.4 L12.9 20.6" stroke="#ffffff" stroke-width="1.4"/></svg>
<div id="t127" style="position:absolute;left:448.7px;top:1100.73px;font-family:'Liberation Sans', sans-serif;font-size:18.2px;line-height:18.2px;color:#3b3b3b;font-weight:normal;white-space:pre;transform:scaleX(0.9527);transform-origin:left top;">main*</div>
<svg style="position:absolute;left:503px;top:1099px;" width="23" height="23" viewBox="0 0 23 23" fill="none"><path d="M4 14.5 Q2.5 8 7.5 4.5 Q11.5 2 16 4 M13.5 1.5 L16.5 4.2 L13.2 6.8 M19 8.5 Q20.5 15 15.5 18.5 Q11.5 21 7 19 M9.5 21.5 L6.5 18.8 L9.8 16.2" stroke="#3b3b3b" stroke-width="1.5" stroke-linecap="round" stroke-linejoin="round"/></svg>
<div style="position:absolute;left:398px;top:1088px;width:138px;height:41px;box-sizing:border-box;border:5px solid #c00000"></div>
<svg style="position:absolute;left:550px;top:1100px;" width="23" height="23" viewBox="0 0 23 23" fill="none"><circle cx="11.5" cy="11.5" r="9.5" stroke="#3b3b3b" stroke-width="1.5"/><path d="M7.5 7.5 L15.5 15.5 M15.5 7.5 L7.5 15.5" stroke="#3b3b3b" stroke-width="1.5"/></svg>
<div id="t128" style="position:absolute;left:579px;top:1101.23px;font-family:'Liberation Sans', sans-serif;font-size:18.2px;line-height:18.2px;color:#3b3b3b;font-weight:normal;white-space:pre;">0</div>
<svg style="position:absolute;left:593px;top:1099px;" width="23" height="22" viewBox="0 0 23 22" fill="none"><path d="M11.5 2 L21.5 20 H1.5 Z" stroke="#3b3b3b" stroke-width="1.5" stroke-linejoin="round"/><path d="M11.5 8 V14" stroke="#3b3b3b" stroke-width="1.6"/><circle cx="11.5" cy="16.8" r="1" fill="#3b3b3b"/></svg>
<div id="t129" style="position:absolute;left:621.8px;top:1101.23px;font-family:'Liberation Sans', sans-serif;font-size:18.2px;line-height:18.2px;color:#3b3b3b;font-weight:normal;white-space:pre;">8</div>
<svg style="position:absolute;left:636.5px;top:1100px;" width="23" height="23" viewBox="0 0 23 23" fill="none"><circle cx="11.5" cy="11.5" r="9.5" stroke="#3b3b3b" stroke-width="1.5"/><path d="M11.5 9.5 V17" stroke="#3b3b3b" stroke-width="1.6"/><circle cx="11.5" cy="6.5" r="1" fill="#3b3b3b"/></svg>
<div id="t130" style="position:absolute;left:664.6px;top:1101.23px;font-family:'Liberation Sans', sans-serif;font-size:18.2px;line-height:18.2px;color:#3b3b3b;font-weight:normal;white-space:pre;transform:scaleX(0.9291);transform-origin:left top;">10</div>
<svg style="position:absolute;left:707px;top:1099px;" width="24" height="24" viewBox="0 0 24 24" fill="none"><path d="M5 3 Q1.5 7 2 11.5 Q2.5 15 5 17 M19 3 Q22.5 7 22 11.5 Q21.5 15 19 17 M8 6 Q6 8.5 6.3 11.5 Q6.5 13.5 8 15 M16 6 Q18 8.5 17.7 11.5 Q17.5 13.5 16 15" stroke="#3b3b3b" stroke-width="1.5" stroke-linecap="round"/>
<circle cx="12" cy="10.5" r="1.8" stroke="#3b3b3b" stroke-width="1.4"/><path d="M12 12.5 L8 22 M12 12.5 L16 22 M9.5 18.5 H14.5" stroke="#3b3b3b" stroke-width="1.5"/></svg>
<div id="t131" style="position:absolute;left:736.6px;top:1101.23px;font-family:'Liberation Sans', sans-serif;font-size:18.2px;line-height:18.2px;color:#3b3b3b;font-weight:normal;white-space:pre;">2</div>
<div id="t132" style="position:absolute;left:1150.7px;top:1101.23px;font-family:'Liberation Sans', sans-serif;font-size:18.2px;line-height:18.2px;color:#3b3b3b;font-weight:normal;white-space:pre;transform:scaleX(0.8992);transform-origin:left top;">Ln 4, Col 1</div>
<div id="t133" style="position:absolute;left:1255.6px;top:1101.23px;font-family:'Liberation Sans', sans-serif;font-size:18.2px;line-height:18.2px;color:#3b3b3b;font-weight:normal;white-space:pre;transform:scaleX(0.8814);transform-origin:left top;">Spaces: 4</div>
<div id="t134" style="position:absolute;left:1350.7px;top:1101.23px;font-family:'Liberation Sans', sans-serif;font-size:18.2px;line-height:18.2px;color:#3b3b3b;font-weight:normal;white-space:pre;transform:scaleX(0.9121);transform-origin:left top;">UTF-8</div>
<div id="t135" style="position:absolute;left:1422.6px;top:1101.23px;font-family:'Liberation Sans', sans-serif;font-size:18.2px;line-height:18.2px;color:#3b3b3b;font-weight:normal;white-space:pre;transform:scaleX(0.7582);transform-origin:left top;">LF</div>
<div id="t136" style="position:absolute;left:1465.5px;top:1101.23px;font-family:'Liberation Sans', sans-serif;font-size:18.2px;line-height:18.2px;color:#3b3b3b;font-weight:normal;white-space:pre;">{ }</div>
<div id="t137" style="position:absolute;left:1495.3px;top:1101.23px;font-family:'Liberation Sans', sans-serif;font-size:18.2px;line-height:18.2px;color:#3b3b3b;font-weight:normal;white-space:pre;transform:scaleX(0.9607);transform-origin:left top;">Python</div>
<svg style="position:absolute;left:1572px;top:1099px;" width="28" height="24" viewBox="0 0 28 24" fill="none"><path d="M3.5 9 Q3 4 6.5 2.5 Q10 1 12.5 3.5 Q13.5 4.5 14 6 Q14.5 4.5 15.5 3.5 Q18 1 21.5 2.5 Q25 4 24.5 9 L25.5 12 V17 Q25.5 19 23 20.5 Q18.5 23 14 23 Q9.5 23 5 20.5 Q2.5 19 2.5 17 V12 Z" fill="#3b3b3b"/>
<path d="M7 7 Q7 4.5 9.5 4.5 Q12 4.5 12 7 Q12 9.5 9.5 9.5 Q7 9.5 7 7 Z M16 7 Q16 4.5 18.5 4.5 Q21 4.5 21 7 Q21 9.5 18.5 9.5 Q16 9.5 16 7 Z" fill="#f8f8f8"/>
<path d="M6.5 13 Q6.5 11.5 8 11.5 H20 Q21.5 11.5 21.5 13 V17 Q21.5 18.5 20 18.5 H8 Q6.5 18.5 6.5 17 Z" fill="#f8f8f8"/>
<path d="M10.5 13.5 V16 M17.5 13.5 V16" stroke="#3b3b3b" stroke-width="2" stroke-linecap="round"/></svg>
<div id="t138" style="position:absolute;left:1621.2px;top:1101.23px;font-family:'Liberation Sans', sans-serif;font-size:18.2px;line-height:18.2px;color:#3b3b3b;font-weight:normal;white-space:pre;transform:scaleX(0.9410);transform-origin:left top;">3.14.2 (lab-h)</div>
<svg style="position:absolute;left:1748px;top:1099px;" width="23" height="24" viewBox="0 0 23 24" fill="none"><path d="M11.5 2 Q5 2 4.5 9 V14 Q4.5 16 2.5 18.5 H20.5 Q18.5 16 18.5 14 V9 Q18 2 11.5 2 Z" stroke="#3b3b3b" stroke-width="1.5" stroke-linejoin="round"/><path d="M9.5 19.5 Q9.5 21.5 11.5 21.5 Q13.5 21.5 13.5 19.5" stroke="#3b3b3b" stroke-width="1.5"/></svg>
</div></body></html>
